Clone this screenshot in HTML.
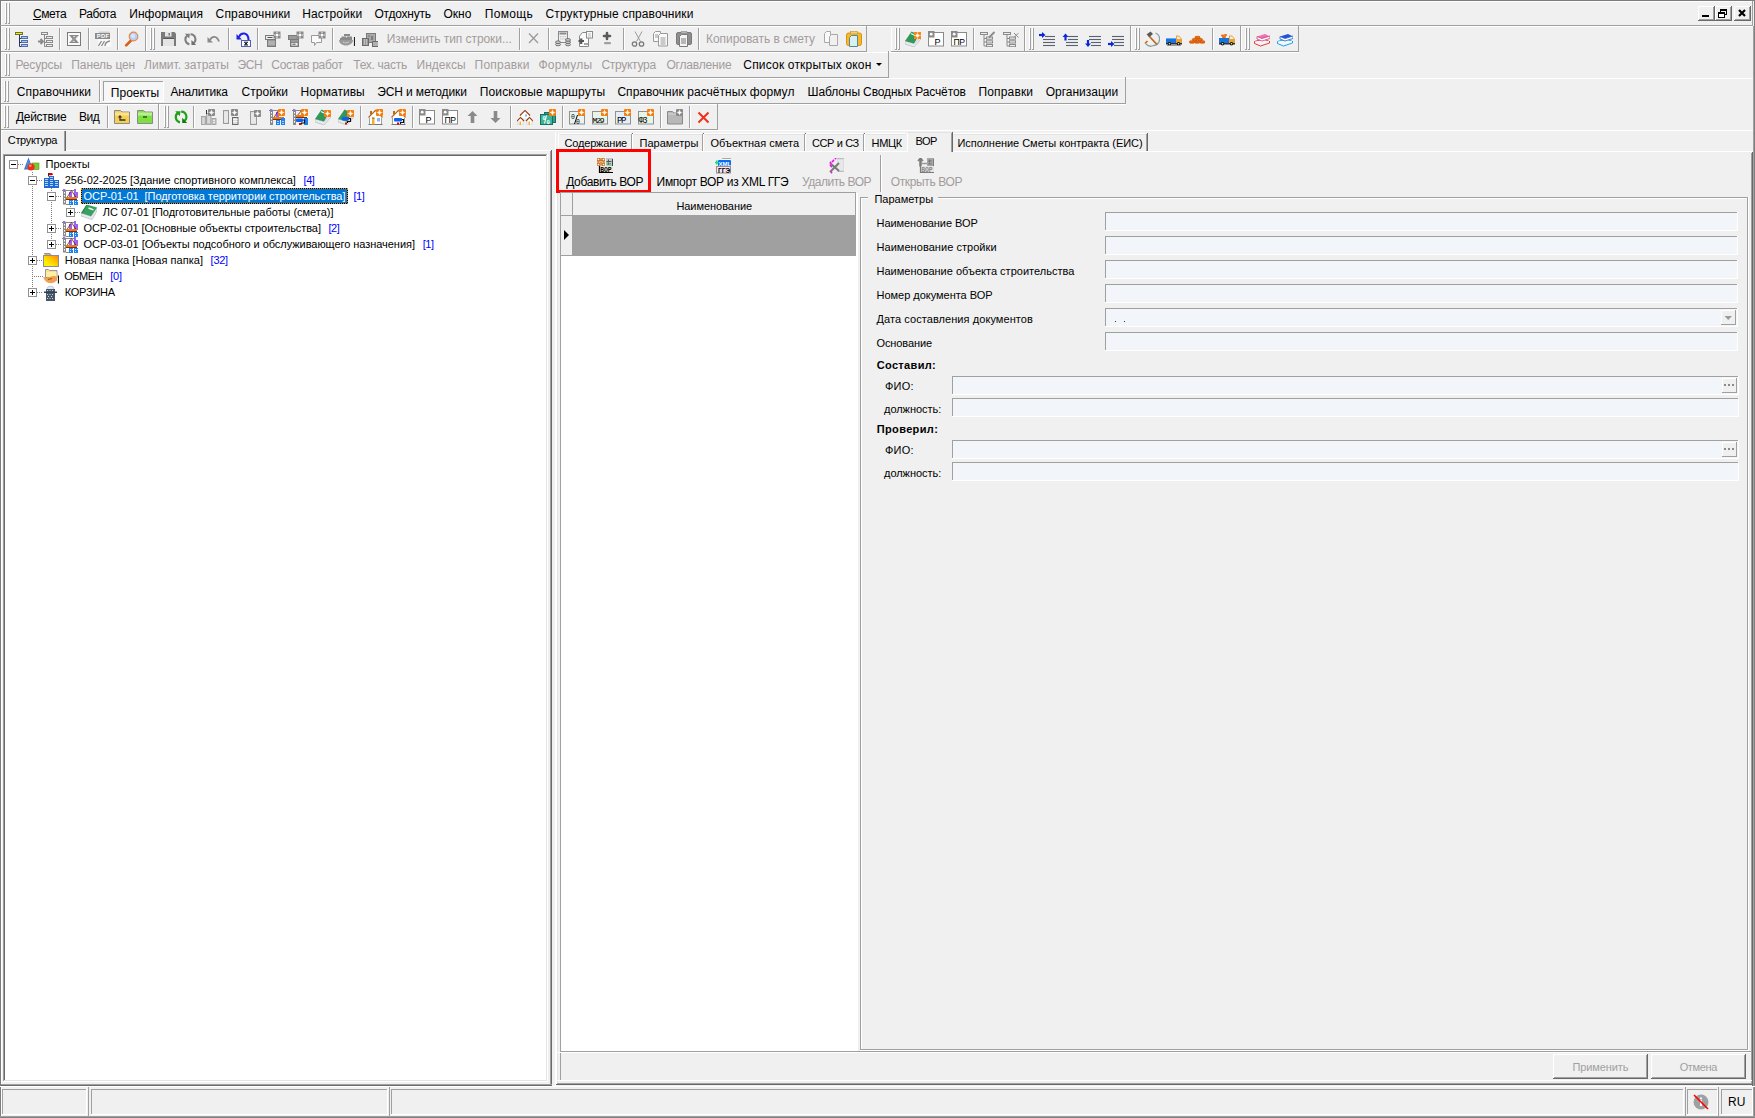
<!DOCTYPE html>
<html><head><meta charset="utf-8"><style>
html,body{margin:0;padding:0;width:1755px;height:1118px;overflow:hidden;background:#f0f0f0}
body>div{position:absolute}
.t{white-space:pre;font-family:"Liberation Sans",sans-serif}
</style></head><body>
<div style="left:0px;top:0px;width:1755px;height:1118px;background:#f0f0f0;"></div>
<div style="left:0px;top:0px;width:1755px;height:1px;background:#7c7c7c;"></div>
<div style="left:0px;top:0px;width:1px;height:1118px;background:#7c7c7c;"></div>
<div style="left:1754px;top:0px;width:1px;height:1118px;background:#808080;"></div>
<div style="left:1753px;top:26px;width:1px;height:1092px;background:#a0a0a0;"></div>
<div style="left:1px;top:1px;width:1752px;height:1px;background:#ffffff;"></div>
<div style="left:1px;top:1px;width:1px;height:25px;background:#ffffff;"></div>
<div style="left:5px;top:3px;width:1px;height:20px;background:#ffffff;"></div>
<div style="left:6px;top:3px;width:1px;height:21px;background:#a0a0a0;"></div>
<div style="left:8px;top:3px;width:1px;height:20px;background:#ffffff;"></div>
<div style="left:9px;top:3px;width:1px;height:21px;background:#a0a0a0;"></div>
<div style="left:5px;top:23px;width:1px;height:1px;background:#a0a0a0;"></div>
<div style="left:8px;top:23px;width:1px;height:1px;background:#a0a0a0;"></div>
<div class="t" style="left:33.00px;top:8px;font-size:12px;line-height:12px;color:#000;letter-spacing:-0.413px;">Смета</div>
<div class="t" style="left:79.11px;top:8px;font-size:12px;line-height:12px;color:#000;letter-spacing:-0.450px;">Работа</div>
<div class="t" style="left:129.30px;top:8px;font-size:12px;line-height:12px;color:#000;letter-spacing:0.025px;">Информация</div>
<div class="t" style="left:215.50px;top:8px;font-size:12px;line-height:12px;color:#000;letter-spacing:0.211px;">Справочники</div>
<div class="t" style="left:302.20px;top:8px;font-size:12px;line-height:12px;color:#000;letter-spacing:0.133px;">Настройки</div>
<div class="t" style="left:374.40px;top:8px;font-size:12px;line-height:12px;color:#000;letter-spacing:-0.212px;">Отдохнуть</div>
<div class="t" style="left:443.40px;top:8px;font-size:12px;line-height:12px;color:#000;letter-spacing:0.030px;">Окно</div>
<div class="t" style="left:484.70px;top:8px;font-size:12px;line-height:12px;color:#000;letter-spacing:0.341px;">Помощь</div>
<div class="t" style="left:545.50px;top:8px;font-size:12px;line-height:12px;color:#000;letter-spacing:0.107px;">Структурные справочники</div>
<div style="left:33px;top:19px;width:8px;height:1px;background:#000;"></div>
<div style="left:0px;top:25px;width:1753px;height:1px;background:#a0a0a0;"></div>
<div style="left:1752px;top:1px;width:1px;height:25px;background:#a0a0a0;"></div>
<div style="left:1698px;top:6px;width:17px;height:15px;background:#f0f0f0;"></div>
<div style="left:1698px;top:6px;width:17px;height:1px;background:#ffffff;"></div>
<div style="left:1698px;top:6px;width:1px;height:15px;background:#ffffff;"></div>
<div style="left:1698px;top:20px;width:17px;height:1px;background:#696969;"></div>
<div style="left:1714px;top:6px;width:1px;height:15px;background:#696969;"></div>
<div style="left:1699px;top:19px;width:15px;height:1px;background:#a0a0a0;"></div>
<div style="left:1713px;top:7px;width:1px;height:13px;background:#a0a0a0;"></div>
<svg style="position:absolute;left:1698px;top:6px" width="17" height="15" viewBox="0 0 17 15"><rect x="4" y="9" width="7" height="2" fill="#000"/></svg>
<div style="left:1715px;top:6px;width:17px;height:15px;background:#f0f0f0;"></div>
<div style="left:1715px;top:6px;width:17px;height:1px;background:#ffffff;"></div>
<div style="left:1715px;top:6px;width:1px;height:15px;background:#ffffff;"></div>
<div style="left:1715px;top:20px;width:17px;height:1px;background:#696969;"></div>
<div style="left:1731px;top:6px;width:1px;height:15px;background:#696969;"></div>
<div style="left:1716px;top:19px;width:15px;height:1px;background:#a0a0a0;"></div>
<div style="left:1730px;top:7px;width:1px;height:13px;background:#a0a0a0;"></div>
<svg style="position:absolute;left:1715px;top:6px" width="17" height="15" viewBox="0 0 17 15"><rect x="5.5" y="3.5" width="6" height="5" fill="none" stroke="#000" stroke-width="1"/><rect x="5" y="3" width="7" height="2" fill="#000"/><rect x="3.5" y="6.5" width="6" height="5" fill="#fff" stroke="#000" stroke-width="1"/><rect x="3" y="6" width="7" height="2" fill="#000"/></svg>
<div style="left:1734px;top:6px;width:17px;height:15px;background:#f0f0f0;"></div>
<div style="left:1734px;top:6px;width:17px;height:1px;background:#ffffff;"></div>
<div style="left:1734px;top:6px;width:1px;height:15px;background:#ffffff;"></div>
<div style="left:1734px;top:20px;width:17px;height:1px;background:#696969;"></div>
<div style="left:1750px;top:6px;width:1px;height:15px;background:#696969;"></div>
<div style="left:1735px;top:19px;width:15px;height:1px;background:#a0a0a0;"></div>
<div style="left:1749px;top:7px;width:1px;height:13px;background:#a0a0a0;"></div>
<svg style="position:absolute;left:1734px;top:6px" width="17" height="15" viewBox="0 0 17 15"><path d="M5 4l6 6M11 4l-6 6" stroke="#000" stroke-width="2.2"/></svg>
<div style="left:1px;top:26px;width:1752px;height:1px;background:#ffffff;"></div>
<div style="left:1px;top:26px;width:1px;height:25px;background:#ffffff;"></div>
<div style="left:145px;top:25px;width:1px;height:27px;background:#a0a0a0;"></div>
<div style="left:1px;top:51px;width:145px;height:1px;background:#a0a0a0;"></div>
<div style="left:5px;top:28px;width:1px;height:21px;background:#ffffff;"></div>
<div style="left:6px;top:28px;width:1px;height:22px;background:#a0a0a0;"></div>
<div style="left:8px;top:28px;width:1px;height:21px;background:#ffffff;"></div>
<div style="left:9px;top:28px;width:1px;height:22px;background:#a0a0a0;"></div>
<div style="left:5px;top:49px;width:1px;height:1px;background:#a0a0a0;"></div>
<div style="left:8px;top:49px;width:1px;height:1px;background:#a0a0a0;"></div>
<div style="left:146px;top:26px;width:1px;height:25px;background:#ffffff;"></div>
<div style="left:866px;top:25px;width:1px;height:27px;background:#a0a0a0;"></div>
<div style="left:146px;top:51px;width:721px;height:1px;background:#a0a0a0;"></div>
<div style="left:150px;top:28px;width:1px;height:21px;background:#ffffff;"></div>
<div style="left:151px;top:28px;width:1px;height:22px;background:#a0a0a0;"></div>
<div style="left:153px;top:28px;width:1px;height:21px;background:#ffffff;"></div>
<div style="left:154px;top:28px;width:1px;height:22px;background:#a0a0a0;"></div>
<div style="left:150px;top:49px;width:1px;height:1px;background:#a0a0a0;"></div>
<div style="left:153px;top:49px;width:1px;height:1px;background:#a0a0a0;"></div>
<div style="left:891px;top:26px;width:1px;height:25px;background:#ffffff;"></div>
<div style="left:1024px;top:25px;width:1px;height:27px;background:#a0a0a0;"></div>
<div style="left:891px;top:51px;width:134px;height:1px;background:#a0a0a0;"></div>
<div style="left:895px;top:28px;width:1px;height:21px;background:#ffffff;"></div>
<div style="left:896px;top:28px;width:1px;height:22px;background:#a0a0a0;"></div>
<div style="left:898px;top:28px;width:1px;height:21px;background:#ffffff;"></div>
<div style="left:899px;top:28px;width:1px;height:22px;background:#a0a0a0;"></div>
<div style="left:895px;top:49px;width:1px;height:1px;background:#a0a0a0;"></div>
<div style="left:898px;top:49px;width:1px;height:1px;background:#a0a0a0;"></div>
<div style="left:1025px;top:26px;width:1px;height:25px;background:#ffffff;"></div>
<div style="left:1130px;top:25px;width:1px;height:27px;background:#a0a0a0;"></div>
<div style="left:1025px;top:51px;width:106px;height:1px;background:#a0a0a0;"></div>
<div style="left:1029px;top:28px;width:1px;height:21px;background:#ffffff;"></div>
<div style="left:1030px;top:28px;width:1px;height:22px;background:#a0a0a0;"></div>
<div style="left:1032px;top:28px;width:1px;height:21px;background:#ffffff;"></div>
<div style="left:1033px;top:28px;width:1px;height:22px;background:#a0a0a0;"></div>
<div style="left:1029px;top:49px;width:1px;height:1px;background:#a0a0a0;"></div>
<div style="left:1032px;top:49px;width:1px;height:1px;background:#a0a0a0;"></div>
<div style="left:1131px;top:26px;width:1px;height:25px;background:#ffffff;"></div>
<div style="left:1240px;top:25px;width:1px;height:27px;background:#a0a0a0;"></div>
<div style="left:1131px;top:51px;width:110px;height:1px;background:#a0a0a0;"></div>
<div style="left:1135px;top:28px;width:1px;height:21px;background:#ffffff;"></div>
<div style="left:1136px;top:28px;width:1px;height:22px;background:#a0a0a0;"></div>
<div style="left:1138px;top:28px;width:1px;height:21px;background:#ffffff;"></div>
<div style="left:1139px;top:28px;width:1px;height:22px;background:#a0a0a0;"></div>
<div style="left:1135px;top:49px;width:1px;height:1px;background:#a0a0a0;"></div>
<div style="left:1138px;top:49px;width:1px;height:1px;background:#a0a0a0;"></div>
<div style="left:1241px;top:26px;width:1px;height:25px;background:#ffffff;"></div>
<div style="left:1298px;top:25px;width:1px;height:27px;background:#a0a0a0;"></div>
<div style="left:1241px;top:51px;width:58px;height:1px;background:#a0a0a0;"></div>
<div style="left:1245px;top:28px;width:1px;height:21px;background:#ffffff;"></div>
<div style="left:1246px;top:28px;width:1px;height:22px;background:#a0a0a0;"></div>
<div style="left:1248px;top:28px;width:1px;height:21px;background:#ffffff;"></div>
<div style="left:1249px;top:28px;width:1px;height:22px;background:#a0a0a0;"></div>
<div style="left:1245px;top:49px;width:1px;height:1px;background:#a0a0a0;"></div>
<div style="left:1248px;top:49px;width:1px;height:1px;background:#a0a0a0;"></div>
<div style="left:1px;top:52px;width:1298px;height:1px;background:#ffffff;"></div>
<div style="left:1px;top:52px;width:1px;height:25px;background:#ffffff;"></div>
<div style="left:888px;top:51px;width:1px;height:27px;background:#a0a0a0;"></div>
<div style="left:1px;top:77px;width:888px;height:1px;background:#a0a0a0;"></div>
<div style="left:5px;top:54px;width:1px;height:21px;background:#ffffff;"></div>
<div style="left:6px;top:54px;width:1px;height:22px;background:#a0a0a0;"></div>
<div style="left:8px;top:54px;width:1px;height:21px;background:#ffffff;"></div>
<div style="left:9px;top:54px;width:1px;height:22px;background:#a0a0a0;"></div>
<div style="left:5px;top:75px;width:1px;height:1px;background:#a0a0a0;"></div>
<div style="left:8px;top:75px;width:1px;height:1px;background:#a0a0a0;"></div>
<div style="left:1px;top:78px;width:1752px;height:1px;background:#ffffff;"></div>
<div style="left:1px;top:78px;width:1px;height:25px;background:#ffffff;"></div>
<div style="left:1125px;top:77px;width:1px;height:27px;background:#a0a0a0;"></div>
<div style="left:1px;top:103px;width:1125px;height:1px;background:#a0a0a0;"></div>
<div style="left:4px;top:81px;width:1px;height:20px;background:#ffffff;"></div>
<div style="left:5px;top:81px;width:1px;height:21px;background:#a0a0a0;"></div>
<div style="left:7px;top:81px;width:1px;height:20px;background:#ffffff;"></div>
<div style="left:8px;top:81px;width:1px;height:21px;background:#a0a0a0;"></div>
<div style="left:4px;top:101px;width:1px;height:1px;background:#a0a0a0;"></div>
<div style="left:7px;top:101px;width:1px;height:1px;background:#a0a0a0;"></div>
<div style="left:1px;top:104px;width:1125px;height:1px;background:#ffffff;"></div>
<div style="left:1px;top:104px;width:1px;height:25px;background:#ffffff;"></div>
<div style="left:717px;top:103px;width:1px;height:27px;background:#a0a0a0;"></div>
<div style="left:1px;top:129px;width:717px;height:1px;background:#a0a0a0;"></div>
<div style="left:4px;top:106px;width:1px;height:21px;background:#ffffff;"></div>
<div style="left:5px;top:106px;width:1px;height:22px;background:#a0a0a0;"></div>
<div style="left:7px;top:106px;width:1px;height:21px;background:#ffffff;"></div>
<div style="left:8px;top:106px;width:1px;height:22px;background:#a0a0a0;"></div>
<div style="left:4px;top:127px;width:1px;height:1px;background:#a0a0a0;"></div>
<div style="left:7px;top:127px;width:1px;height:1px;background:#a0a0a0;"></div>
<div style="left:1px;top:130px;width:1752px;height:1px;background:#ffffff;"></div>
<div style="left:59px;top:28px;width:1px;height:22px;background:#a0a0a0;"></div>
<div style="left:60px;top:28px;width:1px;height:22px;background:#ffffff;"></div>
<div style="left:88px;top:28px;width:1px;height:22px;background:#a0a0a0;"></div>
<div style="left:89px;top:28px;width:1px;height:22px;background:#ffffff;"></div>
<div style="left:117px;top:28px;width:1px;height:22px;background:#a0a0a0;"></div>
<div style="left:118px;top:28px;width:1px;height:22px;background:#ffffff;"></div>
<div style="left:228px;top:28px;width:1px;height:22px;background:#a0a0a0;"></div>
<div style="left:229px;top:28px;width:1px;height:22px;background:#ffffff;"></div>
<div style="left:257px;top:28px;width:1px;height:22px;background:#a0a0a0;"></div>
<div style="left:258px;top:28px;width:1px;height:22px;background:#ffffff;"></div>
<div style="left:332px;top:28px;width:1px;height:22px;background:#a0a0a0;"></div>
<div style="left:333px;top:28px;width:1px;height:22px;background:#ffffff;"></div>
<div style="left:519px;top:28px;width:1px;height:22px;background:#a0a0a0;"></div>
<div style="left:520px;top:28px;width:1px;height:22px;background:#ffffff;"></div>
<div style="left:548px;top:28px;width:1px;height:22px;background:#a0a0a0;"></div>
<div style="left:549px;top:28px;width:1px;height:22px;background:#ffffff;"></div>
<div style="left:623px;top:28px;width:1px;height:22px;background:#a0a0a0;"></div>
<div style="left:624px;top:28px;width:1px;height:22px;background:#ffffff;"></div>
<div style="left:698px;top:28px;width:1px;height:22px;background:#a0a0a0;"></div>
<div style="left:699px;top:28px;width:1px;height:22px;background:#ffffff;"></div>
<div style="left:973px;top:28px;width:1px;height:22px;background:#a0a0a0;"></div>
<div style="left:974px;top:28px;width:1px;height:22px;background:#ffffff;"></div>
<div style="left:1212px;top:28px;width:1px;height:22px;background:#a0a0a0;"></div>
<div style="left:1213px;top:28px;width:1px;height:22px;background:#ffffff;"></div>
<div style="left:99px;top:80px;width:1px;height:22px;background:#a0a0a0;"></div>
<div style="left:100px;top:80px;width:1px;height:22px;background:#ffffff;"></div>
<div style="left:107px;top:106px;width:1px;height:22px;background:#a0a0a0;"></div>
<div style="left:108px;top:106px;width:1px;height:22px;background:#ffffff;"></div>
<div style="left:193px;top:106px;width:1px;height:22px;background:#a0a0a0;"></div>
<div style="left:194px;top:106px;width:1px;height:22px;background:#ffffff;"></div>
<div style="left:360px;top:106px;width:1px;height:22px;background:#a0a0a0;"></div>
<div style="left:361px;top:106px;width:1px;height:22px;background:#ffffff;"></div>
<div style="left:412px;top:106px;width:1px;height:22px;background:#a0a0a0;"></div>
<div style="left:413px;top:106px;width:1px;height:22px;background:#ffffff;"></div>
<div style="left:510px;top:106px;width:1px;height:22px;background:#a0a0a0;"></div>
<div style="left:511px;top:106px;width:1px;height:22px;background:#ffffff;"></div>
<div style="left:562px;top:106px;width:1px;height:22px;background:#a0a0a0;"></div>
<div style="left:563px;top:106px;width:1px;height:22px;background:#ffffff;"></div>
<div style="left:660px;top:106px;width:1px;height:22px;background:#a0a0a0;"></div>
<div style="left:661px;top:106px;width:1px;height:22px;background:#ffffff;"></div>
<div style="left:689px;top:106px;width:1px;height:22px;background:#a0a0a0;"></div>
<div style="left:690px;top:106px;width:1px;height:22px;background:#ffffff;"></div>
<div style="left:158px;top:104px;width:1px;height:26px;background:#a0a0a0;"></div>
<div style="left:159px;top:105px;width:1px;height:24px;background:#ffffff;"></div>
<div style="left:164px;top:106px;width:1px;height:21px;background:#ffffff;"></div>
<div style="left:165px;top:106px;width:1px;height:22px;background:#a0a0a0;"></div>
<div style="left:167px;top:106px;width:1px;height:21px;background:#ffffff;"></div>
<div style="left:168px;top:106px;width:1px;height:22px;background:#a0a0a0;"></div>
<div style="left:164px;top:127px;width:1px;height:1px;background:#a0a0a0;"></div>
<div style="left:167px;top:127px;width:1px;height:1px;background:#a0a0a0;"></div>
<svg style="position:absolute;left:14px;top:31px" width="16" height="16" viewBox="0 0 16 16"><rect x="1.5" y="1.5" width="7" height="2" fill="#f0f000" stroke="#70703a" stroke-width="1"/><path d="M5.5 4v11.5h2M5.5 7.5h2M5.5 11.5h2" stroke="#26355e" stroke-width="1" fill="none"/><rect x="7.5" y="5.5" width="6" height="2" fill="#a9c8f0" stroke="#5570a8" stroke-width="1"/><rect x="7.5" y="9.5" width="6" height="2" fill="#a9c8f0" stroke="#5570a8" stroke-width="1"/><rect x="7.5" y="13.5" width="6" height="2" fill="#a9c8f0" stroke="#5570a8" stroke-width="1"/></svg>
<svg style="position:absolute;left:37px;top:31px" width="16" height="16" viewBox="0 0 16 16"><rect x="4.5" y="1.5" width="6" height="2" fill="#eee" stroke="#8a8a8a" stroke-width="1"/><path d="M7.5 4v11.5h2M7.5 7.5h2M7.5 11.5h2" stroke="#8a8a8a" stroke-width="1" fill="none"/><rect x="9.5" y="5.5" width="6" height="2" fill="#eee" stroke="#8a8a8a" stroke-width="1"/><rect x="9.5" y="9.5" width="6" height="2" fill="#eee" stroke="#8a8a8a" stroke-width="1"/><rect x="9.5" y="13.5" width="6" height="2" fill="#eee" stroke="#8a8a8a" stroke-width="1"/><path d="M1 10.5h4.5M3.5 8l2.5 2.5l-2.5 2.5" stroke="#8a8a8a" stroke-width="1.8" fill="none"/></svg>
<svg style="position:absolute;left:66px;top:31px" width="16" height="16" viewBox="0 0 16 16"><rect x="1.5" y="1.5" width="13" height="13" fill="#fafafa" stroke="#7a7a7a" stroke-width="1"/><path d="M3.5 4.5h3l6 7h-3z" fill="#8a8a8a"/><path d="M12.5 4.5h-3l-6 7h3z" fill="#9a9a9a"/><path d="M3.5 4.5h9M3.5 11.5h9" stroke="#8a8a8a" stroke-width="1"/></svg>
<svg style="position:absolute;left:95px;top:31px" width="16" height="16" viewBox="0 0 16 16"><path d="M4 0.5h10l1 1.5v2H4z" fill="#d0d0d0"/><rect x="0" y="2" width="15" height="6" fill="#8a8a8a"/><text x="1.8" y="7.4" font-size="5.8" font-family="Liberation Sans" font-weight="bold" fill="#fff" letter-spacing=".3">PDF</text><rect x="3" y="8" width="13" height="7.5" fill="#fafafa"/><path d="M3.5 15l3-5M6.5 15l3-5M10 15c0-2.5 2-4.5 5-5" stroke="#8a8a8a" stroke-width="1.3" fill="none"/></svg>
<svg style="position:absolute;left:124px;top:31px" width="16" height="16" viewBox="0 0 16 16"><path d="M7.5 9L2.2 14.3" stroke="#d86018" stroke-width="2.6" stroke-linecap="round"/><circle cx="9.5" cy="5.5" r="4.3" fill="#b8cff8" stroke="#e08a50" stroke-width="1.2"/><circle cx="9" cy="5" r="2" fill="#dce8ff"/></svg>
<svg style="position:absolute;left:161px;top:31px" width="16" height="16" viewBox="0 0 16 16"><path d="M0 1h13.5l1.5 1.5V15H0z" fill="#7a7a7a"/><rect x="4" y="1" width="6.5" height="4.5" fill="#e4e4e4"/><rect x="7.5" y="2" width="1.5" height="2.5" fill="#7a7a7a"/><rect x="2" y="8" width="11" height="7" fill="#e4e4e4"/><path d="M2 7.5h11" stroke="#5a5a5a"/></svg>
<svg style="position:absolute;left:184px;top:31px" width="16" height="16" viewBox="0 0 16 16"><g transform="translate(-1.2 0.8) scale(0.94)"><path d="M7 13.3A5.2 5.2 0 0 1 5.2 3.8" stroke="#7f7f7f" stroke-width="2.2" fill="none"/><path d="M2.2 2.2H7.6L6.8 7.2z" fill="#7f7f7f"/><path d="M8.2 2.6A5.2 5.2 0 0 1 10.6 12.4" stroke="#7f7f7f" stroke-width="2.2" fill="none"/><path d="M9.2 8.8V14H14.2z" fill="#6f6f6f"/></g></svg>
<svg style="position:absolute;left:206px;top:31px" width="16" height="16" viewBox="0 0 16 16"><path d="M4 9c2-4.5 7-4.5 9 1.5" stroke="#8a8a8a" stroke-width="1.8" fill="none"/><path d="M1.5 6v5.5h5.5z" fill="#8a8a8a"/></svg>
<svg style="position:absolute;left:236px;top:31px" width="16" height="16" viewBox="0 0 16 16"><path d="M3 6c2-5 9-5 9.5 2.5v1.5" stroke="#2020e8" stroke-width="2" fill="none"/><path d="M0.5 3v5.5h5.5z" fill="#2020e8"/><rect x="5.5" y="9.5" width="9" height="6" fill="#fff" stroke="#5060b0"/><path d="M8 10.8l4 3.6M12 10.8l-4 3.6M10 10.5v4.3" stroke="#000" stroke-width="1"/></svg>
<svg style="position:absolute;left:265px;top:31px" width="16" height="16" viewBox="0 0 16 16"><rect x="0.5" y="4.5" width="10" height="4" fill="#ececec" stroke="#7a7a7a"/><path d="M2.5 6.5h5" stroke="#555"/><rect x="2.5" y="8.5" width="8" height="7" fill="#9a9a9a" stroke="#7a7a7a"/><path d="M3 11h7M3 13h7" stroke="#c8c8c8"/><rect x="8.5" y="0.5" width="7" height="7" fill="#8a8a8a"/><circle cx="12" cy="4" r="1.5" fill="#fff"/><path d="M12 1v1M12 6v1M9 4h1M14 4h1" stroke="#eee"/></svg>
<svg style="position:absolute;left:288px;top:31px" width="16" height="16" viewBox="0 0 16 16"><rect x="0.5" y="4.5" width="10" height="4" fill="#9a9a9a" stroke="#7a7a7a"/><rect x="2.5" y="8.5" width="8" height="7" fill="#9a9a9a" stroke="#7a7a7a"/><rect x="3" y="11.5" width="7" height="3.5" fill="#ececec" stroke="#7a7a7a" stroke-width=".8"/><path d="M4.5 13.2h3" stroke="#555"/><rect x="8.5" y="0.5" width="7" height="7" fill="#8a8a8a"/><circle cx="12" cy="4" r="1.5" fill="#fff"/><path d="M12 1v1M12 6v1M9 4h1M14 4h1" stroke="#eee"/></svg>
<svg style="position:absolute;left:310px;top:31px" width="16" height="16" viewBox="0 0 16 16"><path d="M1.5 4.5h10v7h-5l-2 3v-3h-3z" fill="#fafafa" stroke="#9a9a9a"/><rect x="8.5" y="0.5" width="7" height="7" fill="#8a8a8a"/><circle cx="12" cy="4" r="1.5" fill="#fff"/><path d="M12 1v1M12 6v1M9 4h1M14 4h1" stroke="#eee"/></svg>
<svg style="position:absolute;left:339px;top:31px" width="16" height="16" viewBox="0 0 16 16"><path d="M0 9c0 3 3 5.5 7 5.5s7-2.5 7-5.5z" fill="#9a9a9a"/><path d="M1 8h12" stroke="#6a6a6a" stroke-width="1.5"/><rect x="5" y="3" width="6" height="2" fill="#8a8a8a"/><rect x="2.5" y="5.5" width="5" height="2" fill="#8a8a8a"/><rect x="8" y="5.5" width="5" height="2" fill="#8a8a8a"/><path d="M4 11c2 1 4 1 6 0" stroke="#ddd" stroke-width="1"/><path d="M15.5 6v9" stroke="#222" stroke-width="1.2"/></svg>
<svg style="position:absolute;left:362px;top:31px" width="16" height="16" viewBox="0 0 16 16"><rect x="4.5" y="2.5" width="9" height="9" fill="#aaaaaa" stroke="#7a7a7a"/><path d="M6 5h2M9 5l2 4M11 5l-2 4" stroke="#666" stroke-width=".8"/><rect x="0.5" y="7.5" width="6" height="7" fill="#9a9a9a" stroke="#6a6a6a"/><path d="M2.5 8v6M4.5 8v6" stroke="#bbb"/><rect x="10.5" y="10.5" width="6" height="5" fill="#b0b0b0" stroke="#6a6a6a"/></svg>
<svg style="position:absolute;left:526px;top:31px" width="16" height="16" viewBox="0 0 16 16"><path d="M3 2.5l9 9.5M12 2.5l-9 9.5" stroke="#9a9a9a" stroke-width="1.3"/></svg>
<svg style="position:absolute;left:555px;top:31px" width="16" height="16" viewBox="0 0 16 16"><rect x="3.5" y="0.5" width="9" height="11" fill="#f0f0f0" stroke="#8a8a8a"/><rect x="4.5" y="1.5" width="7" height="2" fill="#8a8a8a"/><g fill="#c8c8c8"><rect x="5" y="5" width="1.5" height="1.2"/><rect x="7.3" y="5" width="1.5" height="1.2"/><rect x="9.6" y="5" width="1.5" height="1.2"/><rect x="5" y="7.3" width="1.5" height="1.2"/><rect x="7.3" y="7.3" width="1.5" height="1.2"/><rect x="9.6" y="7.3" width="1.5" height="1.2"/></g><g fill="#cfcfcf" stroke="#6a6a6a" stroke-width=".9"><ellipse cx="3" cy="13.5" rx="2.6" ry="1.3"/><ellipse cx="3" cy="11.2" rx="2.6" ry="1.3"/><ellipse cx="13" cy="13.5" rx="2.6" ry="1.3"/><ellipse cx="13" cy="11.2" rx="2.6" ry="1.3"/><ellipse cx="13" cy="8.9" rx="2.6" ry="1.3"/></g></svg>
<svg style="position:absolute;left:578px;top:31px" width="16" height="16" viewBox="0 0 16 16"><path d="M1.5 5l3-3.5h6v14h-9z" fill="#fafafa" stroke="#8a8a8a"/><rect x="8.5" y="0.5" width="6" height="6.5" fill="#fafafa" stroke="#8a8a8a"/><path d="M10 3h3M10 5h3" stroke="#bbb"/><path d="M0.5 10h5.5M3.2 7.5v5.5" stroke="#555" stroke-width="2.2"/><path d="M6 13h5" stroke="#8a8a8a" stroke-width="1.5"/></svg>
<svg style="position:absolute;left:599px;top:31px" width="16" height="16" viewBox="0 0 16 16"><path d="M8 2v6M5 5h6" stroke="#5a5a5a" stroke-width="2.6" stroke-linecap="round"/><rect x="5" y="11" width="7" height="2.2" rx="1" fill="#a0a0a0"/></svg>
<svg style="position:absolute;left:630px;top:31px" width="16" height="16" viewBox="0 0 16 16"><path d="M5 0.5l5.5 10M12 0.5L6.5 10.5" stroke="#9a9a9a" stroke-width="1"/><circle cx="4.5" cy="13" r="2.2" fill="none" stroke="#7a7a7a" stroke-width="1.3"/><circle cx="11.5" cy="13" r="2.2" fill="none" stroke="#7a7a7a" stroke-width="1.3"/></svg>
<svg style="position:absolute;left:653px;top:31px" width="16" height="16" viewBox="0 0 16 16"><path d="M0.5 2.5l2-2h5v10h-7z" fill="#fafafa" stroke="#9a9a9a"/><path d="M5.5 4.5l2-2h7v12.5h-9z" fill="#fafafa" stroke="#9a9a9a"/><path d="M7.5 7h5M7.5 9h5M7.5 11h5M7.5 13h5M2 4h3M2 6h3" stroke="#9a9a9a"/></svg>
<svg style="position:absolute;left:676px;top:31px" width="16" height="16" viewBox="0 0 16 16"><rect x="0.5" y="1.5" width="15" height="12" rx="1.5" fill="#8e8e8e" stroke="#7a7a7a"/><rect x="5" y="0" width="6" height="2.5" rx="1" fill="#b4b4b4" stroke="#8a8a8a" stroke-width=".6"/><path d="M3.5 5.5l2-2h6v12h-8z" fill="#f4f4f4" stroke="#7a7a7a"/><path d="M5 8h5M5 10h5M5 12h5" stroke="#7a7a7a"/></svg>
<svg style="position:absolute;left:823px;top:31px" width="16" height="16" viewBox="0 0 16 16"><path d="M1.5 2.5l2-2h4v11h-6z" fill="#fafafa" stroke="#a8a8a8"/><path d="M6.5 5.5l2-2h6v11h-8z" fill="#f0f0f0" stroke="#a8a8a8"/></svg>
<svg style="position:absolute;left:846px;top:31px" width="16" height="16" viewBox="0 0 16 16"><rect x="0.5" y="2" width="15" height="12.5" rx="2" fill="#f5b82e" stroke="#d8940a"/><rect x="4.5" y="0.5" width="7" height="2.5" fill="#f0d070" stroke="#c89020" stroke-width=".6"/><path d="M3.5 6.5l2-2h6v11h-8z" fill="#d6f0f4" stroke="#5a8890"/></svg>
<svg style="position:absolute;left:905px;top:31px" width="16" height="16" viewBox="0 0 16 16"><path d="M0 10v3l9 3l7-8v-2.5l-7 7z" fill="#e8eaf0" stroke="#a8b0c0" stroke-width=".6"/><path d="M0 10L6.5 0.5L14 4L9 12.5z" fill="#32985a"/><path d="M6 2.5l3 1.5" stroke="#e8fff0" stroke-width="1.2"/><rect x="9" y="1" width="7" height="7" fill="#f58a1a"/><circle cx="12.5" cy="4.5" r="1.6" fill="#fff"/><path d="M12.5 1.5v1M12.5 6.5v1M9.5 4.5h1M14.5 4.5h1" stroke="#fff"/></svg>
<svg style="position:absolute;left:928px;top:31px" width="16" height="16" viewBox="0 0 16 16"><rect x="0.5" y="1.5" width="15" height="13.5" fill="#fff" stroke="#8a8a8a"/><rect x="0" y="0" width="6.5" height="6.5" fill="#8a8a8a"/><circle cx="3.2" cy="3.2" r="1.4" fill="#fff"/><text x="6.5" y="14" font-size="9" font-family="Liberation Sans" fill="#000">P</text></svg>
<svg style="position:absolute;left:951px;top:31px" width="16" height="16" viewBox="0 0 16 16"><rect x="0.5" y="1.5" width="15" height="13.5" fill="#fff" stroke="#8a8a8a"/><rect x="0" y="0" width="6.5" height="6.5" fill="#8a8a8a"/><circle cx="3.2" cy="3.2" r="1.4" fill="#fff"/><text x="2.5" y="14" font-size="8.6" font-family="Liberation Sans" fill="#000" letter-spacing="-.4">ПР</text></svg>
<svg style="position:absolute;left:980px;top:31px" width="16" height="16" viewBox="0 0 16 16"><rect x="0.5" y="1.5" width="7" height="2" fill="#eee" stroke="#8a8a8a"/><path d="M4 4v11h3M4 7.5h3M4 11h3" stroke="#8a8a8a" fill="none"/><rect x="6.5" y="6" width="6" height="2.2" fill="#eee" stroke="#8a8a8a"/><rect x="6.5" y="9.8" width="6" height="2.2" fill="#eee" stroke="#8a8a8a"/><rect x="6.5" y="13.5" width="6" height="2.2" fill="#eee" stroke="#8a8a8a"/><path d="M9 6.5l5.5-5.5" stroke="#8a8a8a" stroke-width="1.8"/></svg>
<svg style="position:absolute;left:1003px;top:31px" width="16" height="16" viewBox="0 0 16 16"><rect x="0.5" y="1.5" width="7" height="2" fill="#eee" stroke="#8a8a8a"/><path d="M4 4v11h3M4 7.5h3M4 11h3" stroke="#8a8a8a" fill="none"/><rect x="6.5" y="6" width="6" height="2.2" fill="#eee" stroke="#8a8a8a"/><rect x="6.5" y="9.8" width="6" height="2.2" fill="#eee" stroke="#8a8a8a"/><rect x="6.5" y="13.5" width="6" height="2.2" fill="#eee" stroke="#8a8a8a"/><path d="M11 2l4.5 4.5M15.5 2L11 6.5" stroke="#8a8a8a"/></svg>
<svg style="position:absolute;left:1039px;top:31px" width="16" height="16" viewBox="0 0 16 16"><path d="M6 5.5h10" stroke="#5a6272" stroke-width="1.1"/><path d="M4 8.5h12" stroke="#5a6272" stroke-width="1.1"/><path d="M4 11.5h12" stroke="#5a6272" stroke-width="1.1"/><path d="M4 14.5h12" stroke="#5a6272" stroke-width="1.1"/><path d="M0 4h4" stroke="#0a2ad8" stroke-width="2.2"/><path d="M3 1l3.5 3l-3.5 3z" fill="#0a2ad8"/></svg>
<svg style="position:absolute;left:1062px;top:31px" width="16" height="16" viewBox="0 0 16 16"><path d="M6 5.5h10" stroke="#5a6272" stroke-width="1.1"/><path d="M6 8.5h10" stroke="#5a6272" stroke-width="1.1"/><path d="M4 11.5h12" stroke="#5a6272" stroke-width="1.1"/><path d="M4 14.5h12" stroke="#5a6272" stroke-width="1.1"/><path d="M3.5 5v4.5" stroke="#0a2ad8" stroke-width="2.2"/><path d="M0.5 6l3-3.5l3 3.5z" fill="#0a2ad8"/></svg>
<svg style="position:absolute;left:1085px;top:31px" width="16" height="16" viewBox="0 0 16 16"><path d="M4 5.5h12" stroke="#5a6272" stroke-width="1.1"/><path d="M4 8.5h12" stroke="#5a6272" stroke-width="1.1"/><path d="M6 11.5h10" stroke="#5a6272" stroke-width="1.1"/><path d="M6 14.5h10" stroke="#5a6272" stroke-width="1.1"/><path d="M3 9v4" stroke="#0a2ad8" stroke-width="2.2"/><path d="M0 12.5l3 3.5l3-3.5z" fill="#0a2ad8"/></svg>
<svg style="position:absolute;left:1108px;top:31px" width="16" height="16" viewBox="0 0 16 16"><path d="M4 5.5h12" stroke="#5a6272" stroke-width="1.1"/><path d="M4 8.5h12" stroke="#5a6272" stroke-width="1.1"/><path d="M6 11.5h10" stroke="#5a6272" stroke-width="1.1"/><path d="M6 14.5h10" stroke="#5a6272" stroke-width="1.1"/><path d="M0 13h4" stroke="#0a2ad8" stroke-width="2.2"/><path d="M3 10l3.5 3l-3.5 3z" fill="#0a2ad8"/></svg>
<svg style="position:absolute;left:1144px;top:31px" width="16" height="16" viewBox="0 0 16 16"><path d="M11.5 2a6.5 6.5 0 0 1-2 12.5A6.5 6.5 0 0 1 2 13" stroke="#8aa0a0" stroke-width="1.3" fill="none"/><path d="M4.5 4.5l8.5 9" stroke="#c06a1a" stroke-width="1.8"/><path d="M1 12.5l2.5-2.5" stroke="#c06a1a" stroke-width="1.6"/><path d="M2.5 3.5l4-3l2.5 2.5l-3.5 3z" fill="#5a5a5a"/></svg>
<svg style="position:absolute;left:1166px;top:31px" width="16" height="16" viewBox="0 0 16 16"><rect x="0" y="7" width="10" height="5" fill="#1a72e0"/><path d="M0 7h10v1H0z" fill="#60a8f8"/><path d="M10 4.5h3l3 3.5v4h-6z" fill="#f0a030"/><path d="M11 5.5h2l2 2.5h-4z" fill="#d8f0ff"/><rect x="0" y="12" width="16" height="1.5" fill="#333"/><circle cx="3.5" cy="12.8" r="1.8" fill="#111"/><circle cx="12.5" cy="12.8" r="1.8" fill="#111"/><circle cx="3.5" cy="12.8" r=".8" fill="#ee8"/><circle cx="12.5" cy="12.8" r=".8" fill="#ee8"/><path d="M1 14.5h14" stroke="#888" stroke-width=".8"/></svg>
<svg style="position:absolute;left:1189px;top:31px" width="16" height="16" viewBox="0 0 16 16"><g fill="#f06a08" stroke="#c04800" stroke-width=".6"><rect x="6" y="5.3" width="5" height="2.2" rx="1"/><rect x="3.3" y="7.5" width="5" height="2.2" rx="1"/><rect x="8.5" y="7.5" width="5" height="2.2" rx="1"/><rect x="0.5" y="9.8" width="5" height="2.4" rx="1"/><rect x="5.7" y="9.8" width="5" height="2.4" rx="1"/><rect x="10.9" y="9.8" width="5" height="2.4" rx="1"/></g></svg>
<svg style="position:absolute;left:1219px;top:31px" width="16" height="16" viewBox="0 0 16 16"><g fill="#f06a08"><rect x="2" y="3.5" width="3" height="2" rx="1"/><rect x="5" y="3" width="3" height="2" rx="1"/><rect x="3" y="5" width="4" height="2" rx="1"/></g><rect x="0" y="7" width="10" height="5" fill="#1a72e0"/><path d="M10 4.5h3l3 3.5v4h-6z" fill="#f0a030"/><path d="M11 5.5h2l2 2.5h-4z" fill="#d8f0ff"/><rect x="0" y="12" width="16" height="1.5" fill="#333"/><circle cx="3.5" cy="12.8" r="1.8" fill="#111"/><circle cx="12.5" cy="12.8" r="1.8" fill="#111"/><circle cx="3.5" cy="12.8" r=".8" fill="#ee8"/><circle cx="12.5" cy="12.8" r=".8" fill="#ee8"/></svg>
<svg style="position:absolute;left:1254px;top:31px" width="16" height="16" viewBox="0 0 16 16"><path d="M0.5 10.5l9-2.5l6 2.5l-9 3z" fill="#fff" stroke="#e83838" stroke-width="1"/><path d="M0.5 10.5v2l6 2.5l9-3v-2" fill="#f4f4f8" stroke="#e83838" stroke-width="1"/><path d="M3 5.5l8-2.5l5 2.5l-8 2.5z" fill="#f070b0"/><path d="M3 5.5v2.5l5 2l8-2.5v-2.5l-8 2.5z" fill="#fbfbff" stroke="#d04080" stroke-width=".8"/></svg>
<svg style="position:absolute;left:1277px;top:31px" width="16" height="16" viewBox="0 0 16 16"><path d="M0.5 10.5l9-2.5l6 2.5l-9 3z" fill="#fff" stroke="#18a0f0" stroke-width="1"/><path d="M0.5 10.5v2l6 2.5l9-3v-2" fill="#f4f8ff" stroke="#18a0f0" stroke-width="1"/><path d="M3 5.5l8-2.5l5 2.5l-8 2.5z" fill="#2850d8"/><path d="M3 5.5v2.5l5 2l8-2.5v-2.5l-8 2.5z" fill="#fbfbff" stroke="#2060d0" stroke-width=".8"/></svg>
<div class="t" style="left:386.80px;top:33px;font-size:12px;line-height:12px;color:#a39c9c;letter-spacing:-0.060px;">Изменить тип строки...</div>
<div class="t" style="left:706.00px;top:33px;font-size:12px;line-height:12px;color:#a39c9c;letter-spacing:-0.048px;">Копировать в смету</div>
<div class="t" style="left:15.40px;top:59px;font-size:12px;line-height:12px;color:#a39c9c;letter-spacing:-0.098px;">Ресурсы</div>
<div class="t" style="left:71.30px;top:59px;font-size:12px;line-height:12px;color:#a39c9c;letter-spacing:-0.100px;">Панель цен</div>
<div class="t" style="left:144.10px;top:59px;font-size:12px;line-height:12px;color:#a39c9c;letter-spacing:-0.020px;">Лимит. затраты</div>
<div class="t" style="left:237.55px;top:59px;font-size:12px;line-height:12px;color:#a39c9c;letter-spacing:-0.450px;">ЭСН</div>
<div class="t" style="left:271.30px;top:59px;font-size:12px;line-height:12px;color:#a39c9c;letter-spacing:-0.310px;">Состав работ</div>
<div class="t" style="left:353.30px;top:59px;font-size:12px;line-height:12px;color:#a39c9c;letter-spacing:-0.284px;">Тех. часть</div>
<div class="t" style="left:416.50px;top:59px;font-size:12px;line-height:12px;color:#a39c9c;letter-spacing:0.031px;">Индексы</div>
<div class="t" style="left:474.60px;top:59px;font-size:12px;line-height:12px;color:#a39c9c;letter-spacing:0.204px;">Поправки</div>
<div class="t" style="left:538.50px;top:59px;font-size:12px;line-height:12px;color:#a39c9c;letter-spacing:0.234px;">Формулы</div>
<div class="t" style="left:601.40px;top:59px;font-size:12px;line-height:12px;color:#a39c9c;letter-spacing:-0.282px;">Структура</div>
<div class="t" style="left:666.40px;top:59px;font-size:12px;line-height:12px;color:#a39c9c;letter-spacing:-0.192px;">Оглавление</div>
<div class="t" style="left:743.30px;top:59px;font-size:12px;line-height:12px;color:#000;letter-spacing:0.184px;">Список открытых окон</div>
<svg style="position:absolute;left:875px;top:63px" width="8" height="5" viewBox="0 0 8 5"><path d="M1 0h6l-3 3z" fill="#000"/></svg>
<div class="t" style="left:16.70px;top:86px;font-size:12px;line-height:12px;color:#000;letter-spacing:0.161px;">Справочники</div>
<div style="left:103px;top:81px;width:61px;height:21px;background:#f7f7f7;"></div>
<div style="left:103px;top:81px;width:61px;height:1px;background:#a0a0a0;"></div>
<div style="left:103px;top:81px;width:1px;height:21px;background:#a0a0a0;"></div>
<div style="left:103px;top:101px;width:61px;height:1px;background:#ffffff;"></div>
<div style="left:163px;top:81px;width:1px;height:21px;background:#ffffff;"></div>
<div class="t" style="left:110.80px;top:87px;font-size:12px;line-height:12px;color:#000;letter-spacing:0.029px;">Проекты</div>
<div class="t" style="left:170.50px;top:86px;font-size:12px;line-height:12px;color:#000;letter-spacing:-0.253px;">Аналитика</div>
<div class="t" style="left:241.50px;top:86px;font-size:12px;line-height:12px;color:#000;letter-spacing:0.040px;">Стройки</div>
<div class="t" style="left:300.50px;top:86px;font-size:12px;line-height:12px;color:#000;letter-spacing:0.044px;">Нормативы</div>
<div class="t" style="left:377.20px;top:86px;font-size:12px;line-height:12px;color:#000;letter-spacing:-0.122px;">ЭСН и методики</div>
<div class="t" style="left:479.70px;top:86px;font-size:12px;line-height:12px;color:#000;letter-spacing:0.151px;">Поисковые маршруты</div>
<div class="t" style="left:617.40px;top:86px;font-size:12px;line-height:12px;color:#000;letter-spacing:0.043px;">Справочник расчётных формул</div>
<div class="t" style="left:807.60px;top:86px;font-size:12px;line-height:12px;color:#000;letter-spacing:-0.109px;">Шаблоны Сводных Расчётов</div>
<div class="t" style="left:978.50px;top:86px;font-size:12px;line-height:12px;color:#000;letter-spacing:0.147px;">Поправки</div>
<div class="t" style="left:1045.70px;top:86px;font-size:12px;line-height:12px;color:#000;letter-spacing:-0.008px;">Организации</div>
<div class="t" style="left:16.00px;top:111px;font-size:12px;line-height:12px;color:#000;letter-spacing:-0.297px;">Действие</div>
<div class="t" style="left:78.90px;top:111px;font-size:12px;line-height:12px;color:#000;letter-spacing:-0.450px;">Вид</div>
<svg style="position:absolute;left:114px;top:109px" width="16" height="16" viewBox="0 0 16 16"><path d="M0.5 1.5h6l1.5 1.5h7.5v11.5h-15z" fill="#f6cf50" stroke="#8a8a8a"/><path d="M1 3.5h14v3H1z" fill="#fbe38a"/><path d="M6 7.5v3.5h5.5" stroke="#333" stroke-width="1.3" fill="none"/><path d="M3.8 8.5L6 6l2.2 2.5z" fill="#333"/></svg>
<svg style="position:absolute;left:137px;top:109px" width="16" height="16" viewBox="0 0 16 16"><path d="M0.5 1.5h6l1.5 1.5h7.5v11.5h-15z" fill="#7ee040" stroke="#8a8a8a"/><path d="M1 3.5h14v3H1z" fill="#b8f090"/><path d="M6 8h4" stroke="#333" stroke-width="1.3"/></svg>
<svg style="position:absolute;left:173px;top:109px" width="16" height="16" viewBox="0 0 16 16"><path d="M7 13.3A5.2 5.2 0 0 1 5.2 3.8" stroke="#22a018" stroke-width="2.2" fill="none"/><path d="M2.2 2.2H7.6L6.8 7.2z" fill="#22a018"/><path d="M8.2 2.6A5.2 5.2 0 0 1 10.6 12.4" stroke="#22a018" stroke-width="2.2" fill="none"/><path d="M9.2 8.8V14H14.2z" fill="#107a10"/></svg>
<svg style="position:absolute;left:201px;top:109px" width="16" height="16" viewBox="0 0 16 16"><g fill="#c8c8c8" stroke="#9a9a9a" stroke-width=".8"><rect x="0.5" y="7.5" width="4" height="8"/><rect x="5.5" y="4.5" width="4.5" height="11"/><rect x="11" y="9.5" width="4" height="6"/></g><path d="M1.5 10h2M1.5 12h2M1.5 14h2M6.5 7h2.5M6.5 9h2.5M6.5 11h2.5M6.5 13h2.5M12 11.5h2M12 13.5h2" stroke="#eee" stroke-width=".8"/><path d="M5.5 1v4" stroke="#333"/><rect x="7" y="0" width="7" height="7" rx="1" fill="#8a8a8a"/><circle cx="10.5" cy="3.5" r="1.5" fill="#fff"/><path d="M10.5 0.8v1M10.5 5.2v1M7.8 3.5h1M12.2 3.5h1" stroke="#eee" stroke-width=".9"/></svg>
<svg style="position:absolute;left:223px;top:109px" width="16" height="16" viewBox="0 0 16 16"><rect x="0.5" y="1.5" width="5" height="13" fill="#dcdcdc" stroke="#9a9a9a"/><path d="M1 4h4M1 6h4M1 8h4M1 10h4M1 12h4" stroke="#f4f4f4"/><rect x="9.5" y="8.5" width="5.5" height="7" fill="#dcdcdc" stroke="#6a6a6a"/><path d="M10 10.5h4.5M10 12.5h4.5" stroke="#f4f4f4"/><rect x="8" y="0" width="7" height="7" rx="1" fill="#8a8a8a"/><circle cx="11.5" cy="3.5" r="1.5" fill="#fff"/><path d="M11.5 0.8v1M11.5 5.2v1M8.8 3.5h1M13.2 3.5h1" stroke="#eee" stroke-width=".9"/></svg>
<svg style="position:absolute;left:250px;top:109px" width="16" height="16" viewBox="0 0 16 16"><rect x="0.5" y="2.5" width="6" height="13" fill="#dcdcdc" stroke="#9a9a9a"/><path d="M1 5h5M1 7h5M1 9h5M1 11h5M1 13h5" stroke="#f4f4f4"/><rect x="4" y="1" width="7" height="7" rx="1" fill="#8a8a8a"/><circle cx="7.5" cy="4.5" r="1.5" fill="#fff"/><path d="M7.5 1.8v1M7.5 6.2v1M4.8 4.5h1M9.2 4.5h1" stroke="#eee" stroke-width=".9"/></svg>
<svg style="position:absolute;left:269px;top:109px" width="16" height="16" viewBox="0 0 16 16"><path d="M0 1.5h9" stroke="#8a8a8a"/><rect x="1" y="1" width="3" height="15" fill="#8a8a8a"/><g fill="#fff"><rect x="2" y="3" width="1" height="1.5"/><rect x="2" y="6" width="1" height="1.5"/><rect x="2" y="9" width="1" height="1.5"/><rect x="2" y="12" width="1" height="1.5"/></g><path d="M1 0h2l1 1.5H1z" fill="#a070f0"/><path d="M7 3h3v6H7z" fill="#a060f0"/><path d="M5 8.5L9.5 1.5" stroke="#6a1a1a" stroke-width=".8"/><rect x="4" y="8" width="11" height="3" fill="#f07a10"/><path d="M4 10.5h11" stroke="#7a3010"/><rect x="7" y="11" width="4" height="5" fill="#2080f0"/><rect x="12" y="9" width="4" height="7" fill="#2080f0"/><path d="M8 12.5h2M8 14.5h2M13 12.5h2M13 14.5h2" stroke="#d0e4ff" stroke-width=".8"/><rect x="9" y="0" width="7" height="7" rx="1" fill="#f58010"/><circle cx="12.5" cy="3.5" r="1.5" fill="#fff"/><path d="M12.5 0.8v1M12.5 5.2v1M9.8 3.5h1M14.2 3.5h1" stroke="#fff" stroke-width=".9"/></svg>
<svg style="position:absolute;left:292px;top:109px" width="16" height="16" viewBox="0 0 16 16"><path d="M0 1.5h9" stroke="#8a8a8a"/><rect x="1" y="1" width="3" height="15" fill="#8a8a8a"/><g fill="#fff"><rect x="2" y="3" width="1" height="1.5"/><rect x="2" y="6" width="1" height="1.5"/><rect x="2" y="9" width="1" height="1.5"/><rect x="2" y="12" width="1" height="1.5"/></g><path d="M1 0h2l1 1.5H1z" fill="#a070f0"/><path d="M5 7L9.5 1.5" stroke="#6a1a1a" stroke-width=".8"/><rect x="4" y="6" width="8" height="3" fill="#f07a10"/><path d="M4 8.5h11" stroke="#7a3010"/><rect x="12" y="9" width="4" height="7" fill="#2080f0"/><rect x="4" y="9.5" width="7" height="3.5" rx="1" fill="#1060f0"/><path d="M11 11h1.5v3h-3v1.5" stroke="#111" stroke-width="1.2" fill="none"/><rect x="7" y="14" width="2" height="2" fill="#e00000"/><rect x="9" y="0" width="7" height="7" rx="1" fill="#f58010"/><circle cx="12.5" cy="3.5" r="1.5" fill="#fff"/><path d="M12.5 0.8v1M12.5 5.2v1M9.8 3.5h1M14.2 3.5h1" stroke="#fff" stroke-width=".9"/></svg>
<svg style="position:absolute;left:315px;top:109px" width="16" height="16" viewBox="0 0 16 16"><path d="M0 10v3l9 3l7-8v-2.5l-7 7z" fill="#e8eaf0" stroke="#a8b0c0" stroke-width=".6"/><path d="M0 10L6.5 0.5L14 4L9 12.5z" fill="#32985a"/><path d="M6 2.5l3 1.5" stroke="#e8fff0" stroke-width="1.2"/><rect x="9" y="1" width="7" height="7" rx="1" fill="#f58010"/><circle cx="12.5" cy="4.5" r="1.5" fill="#fff"/><path d="M12.5 1.8v1M12.5 6.2v1M9.8 4.5h1M14.2 4.5h1" stroke="#fff" stroke-width=".9"/></svg>
<svg style="position:absolute;left:338px;top:109px" width="16" height="16" viewBox="0 0 16 16"><path d="M0 10v3l9 3l7-8v-2.5l-7 7z" fill="#e8eaf0" stroke="#a8b0c0" stroke-width=".6"/><path d="M0 10L6.5 0.5L14 4L9 12.5z" fill="#32985a"/><rect x="4" y="8" width="7" height="3.5" rx="1" fill="#1060f0"/><path d="M11 9.5h1.5v3h-3v1.5" stroke="#111" stroke-width="1.2" fill="none"/><rect x="7" y="13.5" width="2" height="2" fill="#e00000"/><rect x="9" y="1" width="7" height="7" rx="1" fill="#f58010"/><circle cx="12.5" cy="4.5" r="1.5" fill="#fff"/><path d="M12.5 1.8v1M12.5 6.2v1M9.8 4.5h1M14.2 4.5h1" stroke="#fff" stroke-width=".9"/></svg>
<svg style="position:absolute;left:368px;top:109px" width="16" height="16" viewBox="0 0 16 16"><path d="M0.5 8.5L7.5 1.5L14.5 8.5" stroke="#b86a20" stroke-width="1.3" fill="none"/><rect x="2" y="2" width="2" height="3.5" fill="#b86a20"/><path d="M1.5 8.5L7.5 2.5l6 6V15h-12z" fill="#fff"/><path d="M1.5 8.5V15M13.5 8.5V15" stroke="#a0a0a0"/><path d="M0.5 15.5h14" stroke="#777"/><rect x="4" y="9" width="2.5" height="6.5" fill="#f0b030"/><path d="M4 9h2.5" stroke="#8a5a20"/><rect x="9" y="9" width="3" height="3.5" fill="#8ab8f0"/><rect x="8" y="0" width="7" height="7" rx="1" fill="#f58010"/><circle cx="11.5" cy="3.5" r="1.5" fill="#fff"/><path d="M11.5 0.8v1M11.5 5.2v1M8.8 3.5h1M13.2 3.5h1" stroke="#fff" stroke-width=".9"/></svg>
<svg style="position:absolute;left:391px;top:109px" width="16" height="16" viewBox="0 0 16 16"><path d="M0.5 8.5L7.5 1.5L14.5 8.5" stroke="#b86a20" stroke-width="1.3" fill="none"/><rect x="2" y="2" width="2" height="3.5" fill="#b86a20"/><path d="M1.5 8.5L7.5 2.5l6 6V15h-12z" fill="#fff"/><path d="M1.5 8.5V15M13.5 8.5V15" stroke="#a0a0a0"/><path d="M0.5 15.5h14" stroke="#777"/><rect x="3" y="9" width="8" height="3.5" rx="1" fill="#1060f0"/><path d="M11 10.5h1.5v3h-3v1.5" stroke="#111" stroke-width="1.2" fill="none"/><rect x="6" y="13.5" width="2" height="2" fill="#e00000"/><rect x="8" y="0" width="7" height="7" rx="1" fill="#f58010"/><circle cx="11.5" cy="3.5" r="1.5" fill="#fff"/><path d="M11.5 0.8v1M11.5 5.2v1M8.8 3.5h1M13.2 3.5h1" stroke="#fff" stroke-width=".9"/></svg>
<svg style="position:absolute;left:419px;top:109px" width="16" height="16" viewBox="0 0 16 16"><rect x="0.5" y="1.5" width="15" height="13.5" fill="#fff" stroke="#8a8a8a"/><rect x="0" y="0" width="6.5" height="6.5" fill="#8a8a8a"/><circle cx="3.2" cy="3.2" r="1.4" fill="#fff"/><text x="6.5" y="14" font-size="9" font-family="Liberation Sans" fill="#000">P</text></svg>
<svg style="position:absolute;left:442px;top:109px" width="16" height="16" viewBox="0 0 16 16"><rect x="0.5" y="1.5" width="15" height="13.5" fill="#fff" stroke="#8a8a8a"/><rect x="0" y="0" width="6.5" height="6.5" fill="#8a8a8a"/><circle cx="3.2" cy="3.2" r="1.4" fill="#fff"/><text x="2.5" y="14" font-size="8.6" font-family="Liberation Sans" fill="#000" letter-spacing="-.4">ПР</text></svg>
<svg style="position:absolute;left:467px;top:109px" width="16" height="16" viewBox="0 0 16 16"><path d="M5.5 2L0.5 7h3.2v7h3.6V7h3.2z" fill="#8a8a8a"/></svg>
<svg style="position:absolute;left:490px;top:109px" width="16" height="16" viewBox="0 0 16 16"><path d="M5.5 14L0.5 9h3.2V2h3.6v7h3.2z" fill="#8a8a8a"/></svg>
<svg style="position:absolute;left:517px;top:109px" width="16" height="16" viewBox="0 0 16 16"><path d="M3 6.5L8 1.5l5 5" stroke="#9a3a10" stroke-width="1.2" fill="none"/><path d="M4 6.5L8 2.5l4 4V9H4z" fill="#fff"/><rect x="8" y="5.5" width="2" height="2" fill="#8ab8f0"/><path d="M0 12l3.5-3.5L7 12M9 12l3.5-3.5L16 12" stroke="#9a3a10" stroke-width="1.2" fill="none"/><path d="M1 12l2.5-2.5L6 12v4H1zM10 12l2.5-2.5L15 12v4h-5z" fill="#fff" stroke="#bbb" stroke-width=".5"/><rect x="2.5" y="12.5" width="1.5" height="3.5" fill="#f0b030"/><rect x="11.5" y="12.5" width="1.5" height="3.5" fill="#f0b030"/></svg>
<svg style="position:absolute;left:540px;top:109px" width="16" height="16" viewBox="0 0 16 16"><rect x="4.5" y="3.5" width="11" height="10" fill="#30a088" stroke="#1a7060"/><rect x="0.5" y="5.5" width="12" height="10" fill="#3cb49a" stroke="#1a7060"/><text x="2.5" y="10.5" font-size="5.5" font-weight="bold" font-family="Liberation Mono" fill="#fff">0</text><path d="M6.5 6.5l-2 8" stroke="#fff"/><text x="6.5" y="14.5" font-size="5.5" font-weight="bold" font-family="Liberation Mono" fill="#fff">0</text><rect x="9" y="0" width="7" height="7" rx="1" fill="#f58010"/><circle cx="12.5" cy="3.5" r="1.5" fill="#fff"/><path d="M12.5 0.8v1M12.5 5.2v1M9.8 3.5h1M14.2 3.5h1" stroke="#fff" stroke-width=".9"/></svg>
<svg style="position:absolute;left:569px;top:109px" width="16" height="16" viewBox="0 0 16 16"><rect x="0.5" y="2.5" width="15" height="12.5" fill="#e8f4f0" stroke="#909090"/><text x="2" y="9.5" font-size="6.5" font-family="Liberation Mono" fill="#000">0</text><path d="M8.5 6l-3 9" stroke="#000"/><text x="7" y="14.5" font-size="6.5" font-family="Liberation Mono" fill="#000">0</text><rect x="9" y="0" width="7" height="7" rx="1" fill="#f58010"/><circle cx="12.5" cy="3.5" r="1.5" fill="#fff"/><path d="M12.5 0.8v1M12.5 5.2v1M9.8 3.5h1M14.2 3.5h1" stroke="#fff" stroke-width=".9"/></svg>
<svg style="position:absolute;left:592px;top:109px" width="16" height="16" viewBox="0 0 16 16"><rect x="0.5" y="2.5" width="15" height="12.5" fill="#e8f4e8" stroke="#909090"/><text x="0.6" y="14" font-size="8" font-family="Liberation Mono" fill="#000" letter-spacing="-1.2">M29</text><rect x="9" y="0" width="7" height="7" rx="1" fill="#f58010"/><circle cx="12.5" cy="3.5" r="1.5" fill="#fff"/><path d="M12.5 0.8v1M12.5 5.2v1M9.8 3.5h1M14.2 3.5h1" stroke="#fff" stroke-width=".9"/></svg>
<svg style="position:absolute;left:615px;top:109px" width="16" height="16" viewBox="0 0 16 16"><rect x="0.5" y="2.5" width="15" height="12.5" fill="#e4eef8" stroke="#909090"/><text x="2" y="14" font-size="9" font-family="Liberation Mono" fill="#000" letter-spacing="-1.5">PP</text><rect x="9" y="0" width="7" height="7" rx="1" fill="#f58010"/><circle cx="12.5" cy="3.5" r="1.5" fill="#fff"/><path d="M12.5 0.8v1M12.5 5.2v1M9.8 3.5h1M14.2 3.5h1" stroke="#fff" stroke-width=".9"/></svg>
<svg style="position:absolute;left:638px;top:109px" width="16" height="16" viewBox="0 0 16 16"><rect x="0.5" y="2.5" width="15" height="12.5" fill="#e8f4e8" stroke="#909090"/><text x="0.5" y="14" font-size="8.5" font-family="Liberation Mono" fill="#000" letter-spacing="-1">Ф3</text><rect x="9" y="0" width="7" height="7" rx="1" fill="#f58010"/><circle cx="12.5" cy="3.5" r="1.5" fill="#fff"/><path d="M12.5 0.8v1M12.5 5.2v1M9.8 3.5h1M14.2 3.5h1" stroke="#fff" stroke-width=".9"/></svg>
<svg style="position:absolute;left:667px;top:109px" width="16" height="16" viewBox="0 0 16 16"><path d="M0.5 2.5h5l1.5 1.5h8.5v11h-15z" fill="#b8b8b8" stroke="#8a8a8a"/><path d="M1 5h14" stroke="#d8d8d8"/><rect x="9" y="0" width="7" height="7" rx="1" fill="#8a8a8a"/><circle cx="12.5" cy="3.5" r="1.5" fill="#fff"/><path d="M12.5 0.8v1M12.5 5.2v1M9.8 3.5h1M14.2 3.5h1" stroke="#eee" stroke-width=".9"/></svg>
<svg style="position:absolute;left:696px;top:109px" width="16" height="16" viewBox="0 0 16 16"><path d="M2.5 3.5l10 10M12.5 3.5l-10 10" stroke="#f0301a" stroke-width="2"/></svg>
<div style="left:1px;top:131px;width:1px;height:955px;background:#ffffff;"></div>
<div style="left:64px;top:131px;width:1px;height:20px;background:#a0a0a0;"></div>
<div style="left:65px;top:131px;width:1px;height:20px;background:#696969;"></div>
<div class="t" style="left:7.80px;top:135px;font-size:11px;line-height:11px;color:#000;letter-spacing:-0.333px;">Структура</div>
<div style="left:66px;top:150px;width:486px;height:1px;background:#ffffff;"></div>
<div style="left:550px;top:151px;width:1px;height:934px;background:#a0a0a0;"></div>
<div style="left:551px;top:150px;width:1px;height:936px;background:#696969;"></div>
<div style="left:1px;top:1084px;width:551px;height:1px;background:#a0a0a0;"></div>
<div style="left:1px;top:1085px;width:551px;height:1px;background:#696969;"></div>
<div style="left:3px;top:154px;width:544px;height:1px;background:#a0a0a0;"></div>
<div style="left:3px;top:154px;width:1px;height:928px;background:#a0a0a0;"></div>
<div style="left:4px;top:155px;width:542px;height:1px;background:#696969;"></div>
<div style="left:4px;top:155px;width:1px;height:926px;background:#696969;"></div>
<div style="left:546px;top:155px;width:1px;height:926px;background:#e3e3e3;"></div>
<div style="left:547px;top:154px;width:1px;height:928px;background:#ffffff;"></div>
<div style="left:4px;top:1080px;width:543px;height:1px;background:#e3e3e3;"></div>
<div style="left:3px;top:1081px;width:545px;height:1px;background:#ffffff;"></div>
<div style="left:5px;top:156px;width:541px;height:924px;background:#ffffff;"></div>
<div style="left:32px;top:172px;width:1px;height:121px;background:repeating-linear-gradient(180deg,#808080 0 1px,transparent 1px 2px)"></div>
<div style="left:51px;top:188px;width:1px;height:57px;background:repeating-linear-gradient(180deg,#808080 0 1px,transparent 1px 2px)"></div>
<div style="left:70px;top:204px;width:1px;height:4px;background:repeating-linear-gradient(180deg,#808080 0 1px,transparent 1px 2px)"></div>
<div style="left:9px;top:160px;width:9px;height:9px;background:#ffffff;box-sizing:border-box;border:1px solid #919191"></div>
<div style="left:11px;top:164px;width:5px;height:1px;background:#000;"></div>
<div style="left:18px;top:164px;width:6px;height:1px;background:repeating-linear-gradient(90deg,#808080 0 1px,transparent 1px 2px)"></div>
<svg style="position:absolute;left:24px;top:157px" width="16" height="16" viewBox="0 0 16 16"><path d="M4.5 0.5L9 12.5H0z" fill="#2f6fd0"/><path d="M4.5 2L7.8 11.5H1.3z" fill="#4a8ae8"/><rect x="8" y="6" width="7" height="6.5" fill="#7ac832" stroke="#5a9a20" stroke-width=".6"/><circle cx="7" cy="10" r="3.6" fill="#e83018"/><circle cx="6.3" cy="8.8" r="1.3" fill="#ff9070"/></svg>
<div class="t" style="left:45.60px;top:159px;font-size:11px;line-height:11px;color:#000;letter-spacing:-0.022px;">Проекты</div>
<div style="left:28px;top:176px;width:9px;height:9px;background:#ffffff;box-sizing:border-box;border:1px solid #919191"></div>
<div style="left:30px;top:180px;width:5px;height:1px;background:#000;"></div>
<div style="left:37px;top:180px;width:6px;height:1px;background:repeating-linear-gradient(90deg,#808080 0 1px,transparent 1px 2px)"></div>
<svg style="position:absolute;left:43px;top:173px" width="16" height="16" viewBox="0 0 16 16"><path d="M5.5 0v3.5" stroke="#333" stroke-width="1"/><path d="M6 0h3l1.2 1.2L9 2.2H6z" fill="#e00000"/><rect x="1" y="5" width="5" height="10" fill="#1e6ad0"/><rect x="6" y="3" width="5" height="12" fill="#1e6ad0"/><rect x="11" y="7" width="5" height="8" fill="#1e6ad0"/><g stroke="#b8d4ff" stroke-width="1"><path d="M2 6.5h3M2 8.5h3M2 10.5h3M2 12.5h3M7 4.5h3M7 6.5h3M7 8.5h3M7 10.5h3M7 12.5h3M12 8.5h3M12 10.5h3M12 12.5h3"/></g></svg>
<div class="t" style="left:64.70px;top:175px;font-size:11px;line-height:11px;color:#000;letter-spacing:-0.006px;">256-02-2025 [Здание спортивного комплекса]</div>
<div class="t" style="left:303.56px;top:175px;font-size:11px;line-height:11px;color:#0000ff;letter-spacing:-0.450px;">[4]</div>
<div style="left:47px;top:192px;width:9px;height:9px;background:#ffffff;box-sizing:border-box;border:1px solid #919191"></div>
<div style="left:49px;top:196px;width:5px;height:1px;background:#000;"></div>
<div style="left:56px;top:196px;width:6px;height:1px;background:repeating-linear-gradient(90deg,#808080 0 1px,transparent 1px 2px)"></div>
<svg style="position:absolute;left:62px;top:189px" width="16" height="16" viewBox="0 0 16 16"><path d="M0 1.5h12" stroke="#8a8a8a" stroke-width="1"/><rect x="1" y="1" width="3" height="14.5" fill="#8a8a8a"/><g fill="#fff"><rect x="2" y="3" width="1" height="1.5"/><rect x="2" y="6" width="1" height="1.5"/><rect x="2" y="9" width="1" height="1.5"/><rect x="2" y="12" width="1" height="1.5"/></g><path d="M4 15.5h3" stroke="#8a8a8a"/><path d="M1 0h2l1 1.5H1z" fill="#a070f0"/><path d="M7 3h3v6H7z" fill="#a060f0"/><path d="M12 0h2v3h2v6h-4z" fill="#a060f0"/><path d="M5 8.5L9.5 1.5L14 8.5" stroke="#6a1a1a" stroke-width=".8" fill="none"/><rect x="4" y="8" width="11" height="3" fill="#f07a10"/><path d="M4 10.5h11" stroke="#7a3010" stroke-width="1"/><rect x="7" y="11" width="4" height="5" fill="#2080f0"/><rect x="12" y="11" width="4" height="5" fill="#2080f0"/><g fill="#d0e4ff"><rect x="8" y="12" width="1" height="1"/><rect x="10" y="12" width="1" height="1"/><rect x="8" y="14" width="1" height="1"/><rect x="13" y="12" width="1" height="1"/><rect x="15" y="12" width="1" height="1"/><rect x="13" y="14" width="1" height="1"/></g></svg>
<div style="left:81px;top:188px;width:267px;height:16px;background:#0078d7;"></div>
<div style="left:81px;top:188px;width:267px;height:16px;box-sizing:border-box;border:1px solid #000"></div>
<div style="left:81px;top:188px;width:267px;height:16px;box-sizing:border-box;border:1px dotted #ff8c00"></div>
<div class="t" style="left:83.50px;top:191px;font-size:11px;line-height:11px;color:#fff;letter-spacing:-0.061px;">ОСР-01-01  [Подготовка территории строительства]</div>
<div class="t" style="left:353.46px;top:191px;font-size:11px;line-height:11px;color:#0000ff;letter-spacing:-0.450px;">[1]</div>
<div style="left:66px;top:208px;width:9px;height:9px;background:#ffffff;box-sizing:border-box;border:1px solid #919191"></div>
<div style="left:68px;top:212px;width:5px;height:1px;background:#000;"></div>
<div style="left:70px;top:210px;width:1px;height:5px;background:#000;"></div>
<div style="left:75px;top:212px;width:6px;height:1px;background:repeating-linear-gradient(90deg,#808080 0 1px,transparent 1px 2px)"></div>
<svg style="position:absolute;left:81px;top:205px" width="16" height="16" viewBox="0 0 16 16"><path d="M0 8L0 11L11 14.5L16 6V2.5L10 11.3z" fill="#e8eaf0" stroke="#a8b0c0" stroke-width=".6"/><path d="M0 8L5.5-0.5L16 2.5L10 11.3z" fill="#3aa060"/><path d="M0.5 8L5.5 0.3L6 0.5L1.5 8.3z" fill="#22804a"/><path d="M7.5 3l5 1.8" stroke="#f0fff4" stroke-width="1.4"/></svg>
<div class="t" style="left:102.80px;top:207px;font-size:11px;line-height:11px;color:#000;letter-spacing:-0.031px;">ЛС 07-01 [Подготовительные работы (смета)]</div>
<div style="left:47px;top:224px;width:9px;height:9px;background:#ffffff;box-sizing:border-box;border:1px solid #919191"></div>
<div style="left:49px;top:228px;width:5px;height:1px;background:#000;"></div>
<div style="left:51px;top:226px;width:1px;height:5px;background:#000;"></div>
<div style="left:56px;top:228px;width:6px;height:1px;background:repeating-linear-gradient(90deg,#808080 0 1px,transparent 1px 2px)"></div>
<svg style="position:absolute;left:62px;top:221px" width="16" height="16" viewBox="0 0 16 16"><path d="M0 1.5h12" stroke="#8a8a8a" stroke-width="1"/><rect x="1" y="1" width="3" height="14.5" fill="#8a8a8a"/><g fill="#fff"><rect x="2" y="3" width="1" height="1.5"/><rect x="2" y="6" width="1" height="1.5"/><rect x="2" y="9" width="1" height="1.5"/><rect x="2" y="12" width="1" height="1.5"/></g><path d="M4 15.5h3" stroke="#8a8a8a"/><path d="M1 0h2l1 1.5H1z" fill="#a070f0"/><path d="M7 3h3v6H7z" fill="#a060f0"/><path d="M12 0h2v3h2v6h-4z" fill="#a060f0"/><path d="M5 8.5L9.5 1.5L14 8.5" stroke="#6a1a1a" stroke-width=".8" fill="none"/><rect x="4" y="8" width="11" height="3" fill="#f07a10"/><path d="M4 10.5h11" stroke="#7a3010" stroke-width="1"/><rect x="7" y="11" width="4" height="5" fill="#2080f0"/><rect x="12" y="11" width="4" height="5" fill="#2080f0"/><g fill="#d0e4ff"><rect x="8" y="12" width="1" height="1"/><rect x="10" y="12" width="1" height="1"/><rect x="8" y="14" width="1" height="1"/><rect x="13" y="12" width="1" height="1"/><rect x="15" y="12" width="1" height="1"/><rect x="13" y="14" width="1" height="1"/></g></svg>
<div class="t" style="left:83.50px;top:223px;font-size:11px;line-height:11px;color:#000;letter-spacing:-0.065px;">ОСР-02-01 [Основные объекты строительства]</div>
<div class="t" style="left:328.40px;top:223px;font-size:11px;line-height:11px;color:#0000ff;letter-spacing:-0.437px;">[2]</div>
<div style="left:47px;top:240px;width:9px;height:9px;background:#ffffff;box-sizing:border-box;border:1px solid #919191"></div>
<div style="left:49px;top:244px;width:5px;height:1px;background:#000;"></div>
<div style="left:51px;top:242px;width:1px;height:5px;background:#000;"></div>
<div style="left:56px;top:244px;width:6px;height:1px;background:repeating-linear-gradient(90deg,#808080 0 1px,transparent 1px 2px)"></div>
<svg style="position:absolute;left:62px;top:237px" width="16" height="16" viewBox="0 0 16 16"><path d="M0 1.5h12" stroke="#8a8a8a" stroke-width="1"/><rect x="1" y="1" width="3" height="14.5" fill="#8a8a8a"/><g fill="#fff"><rect x="2" y="3" width="1" height="1.5"/><rect x="2" y="6" width="1" height="1.5"/><rect x="2" y="9" width="1" height="1.5"/><rect x="2" y="12" width="1" height="1.5"/></g><path d="M4 15.5h3" stroke="#8a8a8a"/><path d="M1 0h2l1 1.5H1z" fill="#a070f0"/><path d="M7 3h3v6H7z" fill="#a060f0"/><path d="M12 0h2v3h2v6h-4z" fill="#a060f0"/><path d="M5 8.5L9.5 1.5L14 8.5" stroke="#6a1a1a" stroke-width=".8" fill="none"/><rect x="4" y="8" width="11" height="3" fill="#f07a10"/><path d="M4 10.5h11" stroke="#7a3010" stroke-width="1"/><rect x="7" y="11" width="4" height="5" fill="#2080f0"/><rect x="12" y="11" width="4" height="5" fill="#2080f0"/><g fill="#d0e4ff"><rect x="8" y="12" width="1" height="1"/><rect x="10" y="12" width="1" height="1"/><rect x="8" y="14" width="1" height="1"/><rect x="13" y="12" width="1" height="1"/><rect x="15" y="12" width="1" height="1"/><rect x="13" y="14" width="1" height="1"/></g></svg>
<div class="t" style="left:83.50px;top:239px;font-size:11px;line-height:11px;color:#000;letter-spacing:-0.051px;">ОСР-03-01 [Объекты подсобного и обслуживающего назначения]</div>
<div class="t" style="left:422.66px;top:239px;font-size:11px;line-height:11px;color:#0000ff;letter-spacing:-0.450px;">[1]</div>
<div style="left:28px;top:256px;width:9px;height:9px;background:#ffffff;box-sizing:border-box;border:1px solid #919191"></div>
<div style="left:30px;top:260px;width:5px;height:1px;background:#000;"></div>
<div style="left:32px;top:258px;width:1px;height:5px;background:#000;"></div>
<div style="left:37px;top:260px;width:6px;height:1px;background:repeating-linear-gradient(90deg,#808080 0 1px,transparent 1px 2px)"></div>
<svg style="position:absolute;left:43px;top:253px" width="16" height="16" viewBox="0 0 16 16"><defs><linearGradient id="fg" x1="0" y1="1" x2="1" y2="0"><stop offset="0.3" stop-color="#ffee00"/><stop offset="1" stop-color="#ff8800"/></linearGradient></defs><path d="M1 0.5h6l1 1.5" stroke="#9090b0" stroke-width="1" fill="#f0c020"/><rect x="1.5" y="1" width="5.5" height="1.5" fill="#f8b000"/><rect x="0.5" y="2.5" width="15" height="11" fill="url(#fg)" stroke="#8a8aa8" stroke-width="1"/></svg>
<div class="t" style="left:64.70px;top:255px;font-size:11px;line-height:11px;color:#000;letter-spacing:0.040px;">Новая папка [Новая папка]</div>
<div class="t" style="left:210.60px;top:255px;font-size:11px;line-height:11px;color:#0000ff;letter-spacing:-0.264px;">[32]</div>
<div style="left:32px;top:276px;width:11px;height:1px;background:repeating-linear-gradient(90deg,#808080 0 1px,transparent 1px 2px)"></div>
<svg style="position:absolute;left:43px;top:269px" width="16" height="16" viewBox="0 0 16 16"><path d="M2.5 0.5h3l1 1h7.5v7h-11.5z" fill="#fbe27a" stroke="#9a90b0" stroke-width="1"/><rect x="3" y="3" width="10.5" height="5" fill="#fff0a0"/><path d="M0 8c2 0 3 1 5 0.5l5 -1.5c2 0 4 0 4 1v3.5c-2 2-5 3-8 2.5c-2-.5-3-1.5-4-2.5z" fill="#f0a050"/><path d="M5 10.5l4-1" stroke="#9a5020" stroke-width="1"/><path d="M15.5 6.5v8" stroke="#111" stroke-width="1.2"/></svg>
<div class="t" style="left:64.26px;top:271px;font-size:11px;line-height:11px;color:#000;letter-spacing:-0.450px;">ОБМЕН</div>
<div class="t" style="left:110.30px;top:271px;font-size:11px;line-height:11px;color:#0000ff;letter-spacing:-0.237px;">[0]</div>
<div style="left:28px;top:288px;width:9px;height:9px;background:#ffffff;box-sizing:border-box;border:1px solid #919191"></div>
<div style="left:30px;top:292px;width:5px;height:1px;background:#000;"></div>
<div style="left:32px;top:290px;width:1px;height:5px;background:#000;"></div>
<div style="left:37px;top:292px;width:6px;height:1px;background:repeating-linear-gradient(90deg,#808080 0 1px,transparent 1px 2px)"></div>
<svg style="position:absolute;left:43px;top:285px" width="16" height="16" viewBox="0 0 16 16"><path d="M4 4.5a3.5 3.5 0 0 1 7 0z" fill="#dde8f8" stroke="#aab" stroke-width=".6"/><rect x="3" y="4" width="9" height="3" fill="#445566"/><rect x="1" y="6.5" width="13" height="1.5" fill="#334455"/><rect x="3" y="8" width="9" height="8" fill="#445566"/><g fill="#ccd4dc"><rect x="4" y="5" width="1" height="1"/><rect x="6.5" y="5" width="1" height="1"/><rect x="9" y="5" width="1" height="1"/><rect x="4" y="9" width="1" height="1"/><rect x="6.5" y="9" width="1" height="1"/><rect x="9" y="9" width="1" height="1"/><rect x="5" y="11" width="1" height="1"/><rect x="8" y="11" width="1" height="1"/><rect x="4" y="13" width="1" height="1"/><rect x="6.5" y="13" width="1" height="1"/><rect x="9" y="13" width="1" height="1"/></g></svg>
<div class="t" style="left:64.70px;top:287px;font-size:11px;line-height:11px;color:#000;letter-spacing:-0.222px;">КОРЗИНА</div>
<div style="left:552px;top:131px;width:1px;height:955px;background:#f0f0f0;"></div>
<div style="left:555px;top:132px;width:1px;height:954px;background:#ffffff;"></div>
<div style="left:556px;top:153px;width:1px;height:931px;background:#ffffff;"></div>
<div style="left:557px;top:153px;width:1px;height:931px;background:#e3e3e3;"></div>
<div style="left:1752px;top:152px;width:1px;height:934px;background:#696969;"></div>
<div style="left:1751px;top:153px;width:1px;height:932px;background:#a0a0a0;"></div>
<div style="left:559px;top:133px;width:72px;height:1px;background:#ffffff;"></div>
<div style="left:560px;top:134px;width:71px;height:1px;background:#e3e3e3;"></div>
<div style="left:558px;top:134px;width:1px;height:17px;background:#ffffff;"></div>
<div style="left:631px;top:134px;width:1px;height:17px;background:#a0a0a0;"></div>
<div style="left:632px;top:133px;width:1px;height:18px;background:#696969;"></div>
<div class="t" style="left:564.50px;top:138px;font-size:11px;line-height:11px;color:#000;letter-spacing:-0.174px;">Содержание</div>
<div style="left:633px;top:133px;width:69px;height:1px;background:#ffffff;"></div>
<div style="left:634px;top:134px;width:68px;height:1px;background:#e3e3e3;"></div>
<div style="left:632px;top:134px;width:1px;height:17px;background:#ffffff;"></div>
<div style="left:702px;top:134px;width:1px;height:17px;background:#a0a0a0;"></div>
<div style="left:703px;top:133px;width:1px;height:18px;background:#696969;"></div>
<div class="t" style="left:639.50px;top:138px;font-size:11px;line-height:11px;color:#000;letter-spacing:0.021px;">Параметры</div>
<div style="left:704px;top:133px;width:100px;height:1px;background:#ffffff;"></div>
<div style="left:705px;top:134px;width:99px;height:1px;background:#e3e3e3;"></div>
<div style="left:703px;top:134px;width:1px;height:17px;background:#ffffff;"></div>
<div style="left:804px;top:134px;width:1px;height:17px;background:#a0a0a0;"></div>
<div style="left:805px;top:133px;width:1px;height:18px;background:#696969;"></div>
<div class="t" style="left:710.50px;top:138px;font-size:11px;line-height:11px;color:#000;letter-spacing:0.008px;">Объектная смета</div>
<div style="left:806px;top:133px;width:57px;height:1px;background:#ffffff;"></div>
<div style="left:807px;top:134px;width:56px;height:1px;background:#e3e3e3;"></div>
<div style="left:805px;top:134px;width:1px;height:17px;background:#ffffff;"></div>
<div style="left:863px;top:134px;width:1px;height:17px;background:#a0a0a0;"></div>
<div style="left:864px;top:133px;width:1px;height:18px;background:#696969;"></div>
<div class="t" style="left:812.00px;top:138px;font-size:11px;line-height:11px;color:#000;letter-spacing:-0.386px;">ССР и СЗ</div>
<div style="left:865px;top:133px;width:41px;height:1px;background:#ffffff;"></div>
<div style="left:866px;top:134px;width:40px;height:1px;background:#e3e3e3;"></div>
<div style="left:864px;top:134px;width:1px;height:17px;background:#ffffff;"></div>
<div class="t" style="left:871.60px;top:138px;font-size:11px;line-height:11px;color:#000;letter-spacing:-0.381px;">НМЦК</div>
<div style="left:953px;top:133px;width:193px;height:1px;background:#ffffff;"></div>
<div style="left:954px;top:134px;width:192px;height:1px;background:#e3e3e3;"></div>
<div style="left:952px;top:134px;width:1px;height:17px;background:#ffffff;"></div>
<div style="left:1146px;top:134px;width:1px;height:17px;background:#a0a0a0;"></div>
<div style="left:1147px;top:133px;width:1px;height:18px;background:#696969;"></div>
<div class="t" style="left:957.40px;top:138px;font-size:11px;line-height:11px;color:#000;letter-spacing:-0.038px;">Исполнение Сметы контракта (ЕИС)</div>
<div style="left:907px;top:132px;width:1px;height:20px;background:#ffffff;"></div>
<div style="left:907px;top:132px;width:45px;height:1px;background:#e3e3e3;"></div>
<div style="left:951px;top:133px;width:1px;height:19px;background:#a0a0a0;"></div>
<div style="left:952px;top:132px;width:1px;height:20px;background:#696969;"></div>
<div class="t" style="left:915.44px;top:136px;font-size:11px;line-height:11px;color:#000;letter-spacing:-0.450px;">ВОР</div>
<div style="left:556px;top:151px;width:351px;height:1px;background:#ffffff;"></div>
<div style="left:953px;top:151px;width:800px;height:1px;background:#ffffff;"></div>
<svg style="position:absolute;left:597px;top:158px" width="18" height="16" viewBox="0 0 18 16"><rect x="0" y="0" width="8" height="8" rx="1" fill="#c8782a"/><g fill="#fff"><circle cx="1.5" cy="1.5" r=".8"/><circle cx="4" cy="0.8" r=".6"/><circle cx="6.5" cy="1.5" r=".8"/><circle cx="4" cy="3.5" r=".6"/><circle cx="2.5" cy="4" r=".6"/><circle cx="5.5" cy="4" r=".6"/><circle cx="4" cy="5" r=".6"/><circle cx="1.5" cy="6.5" r=".8"/><circle cx="6.5" cy="6.5" r=".8"/><circle cx="0.8" cy="4" r=".6"/><circle cx="7.2" cy="4" r=".6"/><circle cx="4" cy="7.2" r=".6"/></g><rect x="9" y="0" width="7" height="8" fill="#c4c4d4"/><path d="M15.5 1v7" stroke="#444" stroke-width="1"/><path d="M9.5 3.5h5M11.5 1.5v5M10 6h4" stroke="#555" stroke-width="1"/><rect x="9.5" y="4" width="2" height="1.5" fill="#40f060"/><rect x="12" y="6" width="2.5" height="1.5" fill="#40f060"/><rect x="2" y="8" width="14" height="7" fill="#f0e8d8"/><path d="M2.5 8v6.5h13.5" stroke="#000" stroke-width="1.2" fill="none"/><text x="3.2" y="14" font-size="6.4" font-weight="bold" font-family="Liberation Mono" fill="#000">BOP</text></svg>
<svg style="position:absolute;left:715px;top:158px" width="18" height="16" viewBox="0 0 18 16"><path d="M7 0.5h9" stroke="#aaa" stroke-width="1"/><rect x="7" y="1" width="9" height="1.5" fill="#fff6ee"/><rect x="3" y="2" width="13" height="6.5" rx="1" fill="#0a6ef0"/><text x="3.6" y="7.6" font-size="6" font-weight="bold" font-family="Liberation Sans" fill="#fff">XML</text><path d="M0 4.5h3.5M1.8 2.5v4" stroke="#10e080" stroke-width="1.6"/><rect x="1.5" y="8.5" width="14" height="6.5" fill="#f8e4f4" stroke="#909090" stroke-width="1"/><text x="3" y="14.6" font-size="6.6" font-weight="bold" font-family="Liberation Sans" fill="#000">ГГЭ</text></svg>
<svg style="position:absolute;left:826px;top:158px" width="18" height="16" viewBox="0 0 18 16"><rect x="11" y="0" width="7" height="14" fill="#dcdcdc"/><path d="M11 0.5h7M12 13.5h6" stroke="#bbb"/><path d="M12 3h5M12 5h5M12 7h5M12 9h5M12 11h5" stroke="#f4f4f4" stroke-width="1"/><path d="M4 5l9 8M13 5l-9 9" stroke="#7a7a7a" stroke-width="2"/><g fill="#ff00ff"><circle cx="9.5" cy="0.5" r=".9"/><circle cx="7.5" cy="2.5" r=".9"/><circle cx="6.5" cy="3.5" r=".9"/><circle cx="4.5" cy="4.5" r=".9"/><circle cx="4.5" cy="7.5" r=".9"/><circle cx="5.5" cy="8.5" r=".9"/><circle cx="5.5" cy="14.5" r=".9"/></g></svg>
<svg style="position:absolute;left:917px;top:158px" width="18" height="16" viewBox="0 0 18 16"><path d="M3.5 0.5v8" stroke="#7a7a7a" stroke-width="2.5"/><path d="M1 3l2.5-3l2.5 3" stroke="#7a7a7a" stroke-width="1.5" fill="none"/><path d="M5 5.5h6" stroke="#9a9a9a" stroke-width="1.5"/><rect x="10" y="0" width="7" height="8" fill="#a8a8a8"/><path d="M16.5 1v7" stroke="#7a7a7a"/><path d="M11 3h4M12.5 1.5v4M11 6h4" stroke="#777"/><rect x="3" y="8" width="14" height="7" fill="#e4e4e4"/><path d="M3.5 8v6.5h13.5" stroke="#7a7a7a" stroke-width="1.2" fill="none"/><text x="4.2" y="14" font-size="6.4" font-weight="bold" font-family="Liberation Mono" fill="#8a8a8a">BOP</text></svg>
<div class="t" style="left:566.20px;top:176px;font-size:12px;line-height:12px;color:#000;letter-spacing:-0.364px;">Добавить ВОР</div>
<div class="t" style="left:656.60px;top:176px;font-size:12px;line-height:12px;color:#000;letter-spacing:-0.310px;">Импорт ВОР из XML ГГЭ</div>
<div class="t" style="left:802.00px;top:176px;font-size:12px;line-height:12px;color:#a39c9c;letter-spacing:-0.449px;">Удалить ВОР</div>
<div class="t" style="left:890.70px;top:176px;font-size:12px;line-height:12px;color:#a39c9c;letter-spacing:-0.360px;">Открыть ВОР</div>
<div style="left:880px;top:155px;width:1px;height:37px;background:#a0a0a0;"></div>
<div style="left:881px;top:155px;width:1px;height:37px;background:#ffffff;"></div>
<div style="left:556px;top:149px;width:95px;height:44px;box-sizing:border-box;border:3px solid #ff0000"></div>
<div style="left:560px;top:192px;width:296px;height:1px;background:#a0a0a0;"></div>
<div style="left:560px;top:192px;width:1px;height:860px;background:#a0a0a0;"></div>
<div style="left:561px;top:193px;width:297px;height:858px;background:#ffffff;"></div>
<div style="left:561px;top:193px;width:295px;height:23px;background:#f0f0f0;"></div>
<div style="left:561px;top:215px;width:295px;height:1px;background:#a0a0a0;"></div>
<div style="left:572px;top:193px;width:1px;height:63px;background:#a0a0a0;"></div>
<div style="left:855px;top:193px;width:1px;height:23px;background:#a0a0a0;"></div>
<div style="left:561px;top:255px;width:12px;height:1px;background:#a0a0a0;"></div>
<div style="left:573px;top:216px;width:283px;height:40px;background:#a0a0a0;"></div>
<div style="left:561px;top:216px;width:11px;height:39px;background:#f0f0f0;"></div>
<svg style="position:absolute;left:563px;top:229px" width="8" height="12" viewBox="0 0 8 12"><path d="M1 1l5 5l-5 5z" fill="#000"/></svg>
<div class="t" style="left:676.40px;top:201px;font-size:11px;line-height:11px;color:#000;letter-spacing:-0.040px;">Наименование</div>
<div style="left:860px;top:197px;width:888px;height:1px;background:#a0a0a0;"></div>
<div style="left:861px;top:198px;width:888px;height:1px;background:#ffffff;"></div>
<div style="left:860px;top:197px;width:1px;height:853px;background:#a0a0a0;"></div>
<div style="left:861px;top:198px;width:1px;height:852px;background:#ffffff;"></div>
<div style="left:1747px;top:197px;width:1px;height:853px;background:#a0a0a0;"></div>
<div style="left:1748px;top:197px;width:1px;height:854px;background:#ffffff;"></div>
<div style="left:860px;top:1049px;width:888px;height:1px;background:#a0a0a0;"></div>
<div style="left:860px;top:1050px;width:889px;height:1px;background:#ffffff;"></div>
<div style="left:868px;top:196px;width:70px;height:4px;background:#f0f0f0;"></div>
<div class="t" style="left:874.40px;top:194px;font-size:11px;line-height:11px;color:#000;letter-spacing:0.009px;">Параметры</div>
<div class="t" style="left:876.50px;top:218px;font-size:11px;line-height:11px;color:#000;letter-spacing:-0.062px;">Наименование ВОР</div>
<div style="left:1105px;top:212px;width:632px;height:1px;background:#a0a0a0;"></div>
<div style="left:1105px;top:212px;width:1px;height:18px;background:#a0a0a0;"></div>
<div style="left:1106px;top:213px;width:631px;height:17px;background:#f2f5fa;"></div>
<div style="left:1105px;top:230px;width:633px;height:1px;background:#ffffff;"></div>
<div style="left:1737px;top:212px;width:1px;height:19px;background:#ffffff;"></div>
<div class="t" style="left:876.50px;top:242px;font-size:11px;line-height:11px;color:#000;letter-spacing:0.045px;">Наименование стройки</div>
<div style="left:1105px;top:236px;width:632px;height:1px;background:#a0a0a0;"></div>
<div style="left:1105px;top:236px;width:1px;height:18px;background:#a0a0a0;"></div>
<div style="left:1106px;top:237px;width:631px;height:17px;background:#f2f5fa;"></div>
<div style="left:1105px;top:254px;width:633px;height:1px;background:#ffffff;"></div>
<div style="left:1737px;top:236px;width:1px;height:19px;background:#ffffff;"></div>
<div class="t" style="left:876.50px;top:266px;font-size:11px;line-height:11px;color:#000;letter-spacing:0.010px;">Наименование объекта строительства</div>
<div style="left:1105px;top:260px;width:632px;height:1px;background:#a0a0a0;"></div>
<div style="left:1105px;top:260px;width:1px;height:18px;background:#a0a0a0;"></div>
<div style="left:1106px;top:261px;width:631px;height:17px;background:#f2f5fa;"></div>
<div style="left:1105px;top:278px;width:633px;height:1px;background:#ffffff;"></div>
<div style="left:1737px;top:260px;width:1px;height:19px;background:#ffffff;"></div>
<div class="t" style="left:876.50px;top:290px;font-size:11px;line-height:11px;color:#000;letter-spacing:-0.024px;">Номер документа ВОР</div>
<div style="left:1105px;top:284px;width:632px;height:1px;background:#a0a0a0;"></div>
<div style="left:1105px;top:284px;width:1px;height:18px;background:#a0a0a0;"></div>
<div style="left:1106px;top:285px;width:631px;height:17px;background:#f2f5fa;"></div>
<div style="left:1105px;top:302px;width:633px;height:1px;background:#ffffff;"></div>
<div style="left:1737px;top:284px;width:1px;height:19px;background:#ffffff;"></div>
<div class="t" style="left:876.50px;top:314px;font-size:11px;line-height:11px;color:#000;letter-spacing:0.070px;">Дата составления документов</div>
<div style="left:1105px;top:308px;width:632px;height:1px;background:#a0a0a0;"></div>
<div style="left:1105px;top:308px;width:1px;height:18px;background:#a0a0a0;"></div>
<div style="left:1106px;top:309px;width:631px;height:17px;background:#f2f5fa;"></div>
<div style="left:1105px;top:326px;width:633px;height:1px;background:#ffffff;"></div>
<div style="left:1737px;top:308px;width:1px;height:19px;background:#ffffff;"></div>
<div class="t" style="left:876.50px;top:338px;font-size:11px;line-height:11px;color:#000;letter-spacing:-0.101px;">Основание</div>
<div style="left:1105px;top:332px;width:632px;height:1px;background:#a0a0a0;"></div>
<div style="left:1105px;top:332px;width:1px;height:18px;background:#a0a0a0;"></div>
<div style="left:1106px;top:333px;width:631px;height:17px;background:#f2f5fa;"></div>
<div style="left:1105px;top:350px;width:633px;height:1px;background:#ffffff;"></div>
<div style="left:1737px;top:332px;width:1px;height:19px;background:#ffffff;"></div>
<div style="left:1721px;top:310px;width:15px;height:15px;background:#f0f0f0;"></div>
<div style="left:1721px;top:310px;width:15px;height:1px;background:#ffffff;"></div>
<div style="left:1721px;top:310px;width:1px;height:15px;background:#ffffff;"></div>
<div style="left:1721px;top:324px;width:15px;height:1px;background:#a0a0a0;"></div>
<div style="left:1735px;top:310px;width:1px;height:15px;background:#a0a0a0;"></div>
<svg style="position:absolute;left:1724px;top:316px" width="9" height="5" viewBox="0 0 9 5"><path d="M0.5 0h7.5l-3.75 4z" fill="#9a9a9a"/></svg>
<div style="left:1115px;top:321px;width:1px;height:1px;background:#333;"></div>
<div style="left:1124px;top:321px;width:1px;height:1px;background:#333;"></div>
<div class="t" style="left:876.70px;top:360px;font-size:11px;line-height:11px;color:#000;font-weight:bold;letter-spacing:0.343px;">Составил:</div>
<div class="t" style="left:876.70px;top:424px;font-size:11px;line-height:11px;color:#000;font-weight:bold;letter-spacing:0.369px;">Проверил:</div>
<div class="t" style="left:884.90px;top:381px;font-size:11px;line-height:11px;color:#000;letter-spacing:0.292px;">ФИО:</div>
<div style="left:952px;top:376px;width:786px;height:1px;background:#a0a0a0;"></div>
<div style="left:952px;top:376px;width:1px;height:18px;background:#a0a0a0;"></div>
<div style="left:953px;top:377px;width:785px;height:17px;background:#f2f5fa;"></div>
<div style="left:952px;top:394px;width:787px;height:1px;background:#ffffff;"></div>
<div style="left:1738px;top:376px;width:1px;height:19px;background:#ffffff;"></div>
<div class="t" style="left:884.00px;top:404px;font-size:11px;line-height:11px;color:#000;letter-spacing:-0.037px;">должность:</div>
<div style="left:952px;top:398px;width:786px;height:1px;background:#a0a0a0;"></div>
<div style="left:952px;top:398px;width:1px;height:18px;background:#a0a0a0;"></div>
<div style="left:953px;top:399px;width:785px;height:17px;background:#f2f5fa;"></div>
<div style="left:952px;top:416px;width:787px;height:1px;background:#ffffff;"></div>
<div style="left:1738px;top:398px;width:1px;height:19px;background:#ffffff;"></div>
<div class="t" style="left:884.90px;top:445px;font-size:11px;line-height:11px;color:#000;letter-spacing:0.292px;">ФИО:</div>
<div style="left:952px;top:440px;width:786px;height:1px;background:#a0a0a0;"></div>
<div style="left:952px;top:440px;width:1px;height:18px;background:#a0a0a0;"></div>
<div style="left:953px;top:441px;width:785px;height:17px;background:#f2f5fa;"></div>
<div style="left:952px;top:458px;width:787px;height:1px;background:#ffffff;"></div>
<div style="left:1738px;top:440px;width:1px;height:19px;background:#ffffff;"></div>
<div class="t" style="left:884.00px;top:468px;font-size:11px;line-height:11px;color:#000;letter-spacing:-0.037px;">должность:</div>
<div style="left:952px;top:462px;width:786px;height:1px;background:#a0a0a0;"></div>
<div style="left:952px;top:462px;width:1px;height:18px;background:#a0a0a0;"></div>
<div style="left:953px;top:463px;width:785px;height:17px;background:#f2f5fa;"></div>
<div style="left:952px;top:480px;width:787px;height:1px;background:#ffffff;"></div>
<div style="left:1738px;top:462px;width:1px;height:19px;background:#ffffff;"></div>
<div style="left:1722px;top:378px;width:15px;height:15px;background:#f0f0f0;"></div>
<div style="left:1722px;top:378px;width:15px;height:1px;background:#ffffff;"></div>
<div style="left:1722px;top:378px;width:1px;height:15px;background:#ffffff;"></div>
<div style="left:1722px;top:392px;width:15px;height:1px;background:#a0a0a0;"></div>
<div style="left:1736px;top:378px;width:1px;height:15px;background:#a0a0a0;"></div>
<div style="left:1724px;top:384px;width:2px;height:2px;background:#8a8a8a;"></div>
<div style="left:1728px;top:384px;width:2px;height:2px;background:#8a8a8a;"></div>
<div style="left:1732px;top:384px;width:2px;height:2px;background:#8a8a8a;"></div>
<div style="left:1722px;top:442px;width:15px;height:15px;background:#f0f0f0;"></div>
<div style="left:1722px;top:442px;width:15px;height:1px;background:#ffffff;"></div>
<div style="left:1722px;top:442px;width:1px;height:15px;background:#ffffff;"></div>
<div style="left:1722px;top:456px;width:15px;height:1px;background:#a0a0a0;"></div>
<div style="left:1736px;top:442px;width:1px;height:15px;background:#a0a0a0;"></div>
<div style="left:1724px;top:448px;width:2px;height:2px;background:#8a8a8a;"></div>
<div style="left:1728px;top:448px;width:2px;height:2px;background:#8a8a8a;"></div>
<div style="left:1732px;top:448px;width:2px;height:2px;background:#8a8a8a;"></div>
<div style="left:560px;top:1051px;width:1191px;height:1px;background:#a0a0a0;"></div>
<div style="left:560px;top:1051px;width:1px;height:29px;background:#a0a0a0;"></div>
<div style="left:557px;top:1052px;width:1194px;height:1px;background:#ffffff;"></div>
<div style="left:557px;top:1080px;width:1195px;height:1px;background:#ffffff;"></div>
<div style="left:557px;top:1083px;width:1195px;height:1px;background:#a0a0a0;"></div>
<div style="left:556px;top:1084px;width:1197px;height:1px;background:#696969;"></div>
<div style="left:1553px;top:1054px;width:95px;height:1px;background:#ffffff;"></div>
<div style="left:1553px;top:1054px;width:1px;height:25px;background:#ffffff;"></div>
<div style="left:1553px;top:1078px;width:95px;height:1px;background:#696969;"></div>
<div style="left:1647px;top:1054px;width:1px;height:25px;background:#696969;"></div>
<div style="left:1554px;top:1077px;width:93px;height:1px;background:#a0a0a0;"></div>
<div style="left:1646px;top:1055px;width:1px;height:23px;background:#a0a0a0;"></div>
<div class="t" style="left:1572.50px;top:1062px;font-size:11px;line-height:11px;color:#a0a0a0;letter-spacing:-0.101px;">Применить</div>
<div style="left:1651px;top:1054px;width:95px;height:1px;background:#ffffff;"></div>
<div style="left:1651px;top:1054px;width:1px;height:25px;background:#ffffff;"></div>
<div style="left:1651px;top:1078px;width:95px;height:1px;background:#696969;"></div>
<div style="left:1745px;top:1054px;width:1px;height:25px;background:#696969;"></div>
<div style="left:1652px;top:1077px;width:93px;height:1px;background:#a0a0a0;"></div>
<div style="left:1744px;top:1055px;width:1px;height:23px;background:#a0a0a0;"></div>
<div class="t" style="left:1679.70px;top:1062px;font-size:11px;line-height:11px;color:#a0a0a0;letter-spacing:-0.370px;">Отмена</div>
<div style="left:0px;top:1086px;width:1755px;height:1px;background:#ffffff;"></div>
<div style="left:1px;top:1086px;width:1px;height:30px;background:#ffffff;"></div>
<div style="left:2px;top:1089px;width:85px;height:1px;background:#a0a0a0;"></div>
<div style="left:2px;top:1089px;width:1px;height:26px;background:#a0a0a0;"></div>
<div style="left:2px;top:1114px;width:85px;height:1px;background:#ffffff;"></div>
<div style="left:86px;top:1089px;width:1px;height:26px;background:#ffffff;"></div>
<div style="left:91px;top:1089px;width:297px;height:1px;background:#a0a0a0;"></div>
<div style="left:91px;top:1089px;width:1px;height:26px;background:#a0a0a0;"></div>
<div style="left:91px;top:1114px;width:297px;height:1px;background:#ffffff;"></div>
<div style="left:387px;top:1089px;width:1px;height:26px;background:#ffffff;"></div>
<div style="left:391px;top:1089px;width:1293px;height:1px;background:#a0a0a0;"></div>
<div style="left:391px;top:1089px;width:1px;height:26px;background:#a0a0a0;"></div>
<div style="left:391px;top:1114px;width:1293px;height:1px;background:#ffffff;"></div>
<div style="left:1683px;top:1089px;width:1px;height:26px;background:#ffffff;"></div>
<div style="left:1687px;top:1089px;width:31px;height:1px;background:#a0a0a0;"></div>
<div style="left:1687px;top:1089px;width:1px;height:26px;background:#a0a0a0;"></div>
<div style="left:1687px;top:1114px;width:31px;height:1px;background:#ffffff;"></div>
<div style="left:1717px;top:1089px;width:1px;height:26px;background:#ffffff;"></div>
<div style="left:1721px;top:1089px;width:32px;height:1px;background:#a0a0a0;"></div>
<div style="left:1721px;top:1089px;width:1px;height:26px;background:#a0a0a0;"></div>
<div style="left:1721px;top:1114px;width:32px;height:1px;background:#ffffff;"></div>
<div style="left:1752px;top:1089px;width:1px;height:26px;background:#ffffff;"></div>
<div style="left:88px;top:1087px;width:1px;height:30px;background:#a0a0a0;"></div>
<div style="left:389px;top:1087px;width:1px;height:30px;background:#a0a0a0;"></div>
<div style="left:1685px;top:1087px;width:1px;height:30px;background:#a0a0a0;"></div>
<div style="left:1718px;top:1087px;width:1px;height:30px;background:#a0a0a0;"></div>
<div style="left:0px;top:1117px;width:1755px;height:1px;background:#808080;"></div>
<div style="left:0px;top:1116px;width:1755px;height:1px;background:#a0a0a0;"></div>
<svg style="position:absolute;left:1693px;top:1094px" width="16" height="16" viewBox="0 0 16 16"><circle cx="8" cy="8" r="7.5" fill="#a0a0a0"/><rect x="7" y="6" width="2" height="6" fill="#fff"/><rect x="7" y="3.5" width="2" height="1.8" fill="#fff"/><path d="M1 1l14 14" stroke="#f00" stroke-width="1.6"/></svg>
<div class="t" style="left:1728.00px;top:1096px;font-size:12px;line-height:12px;color:#000;">RU</div>
</body></html>
